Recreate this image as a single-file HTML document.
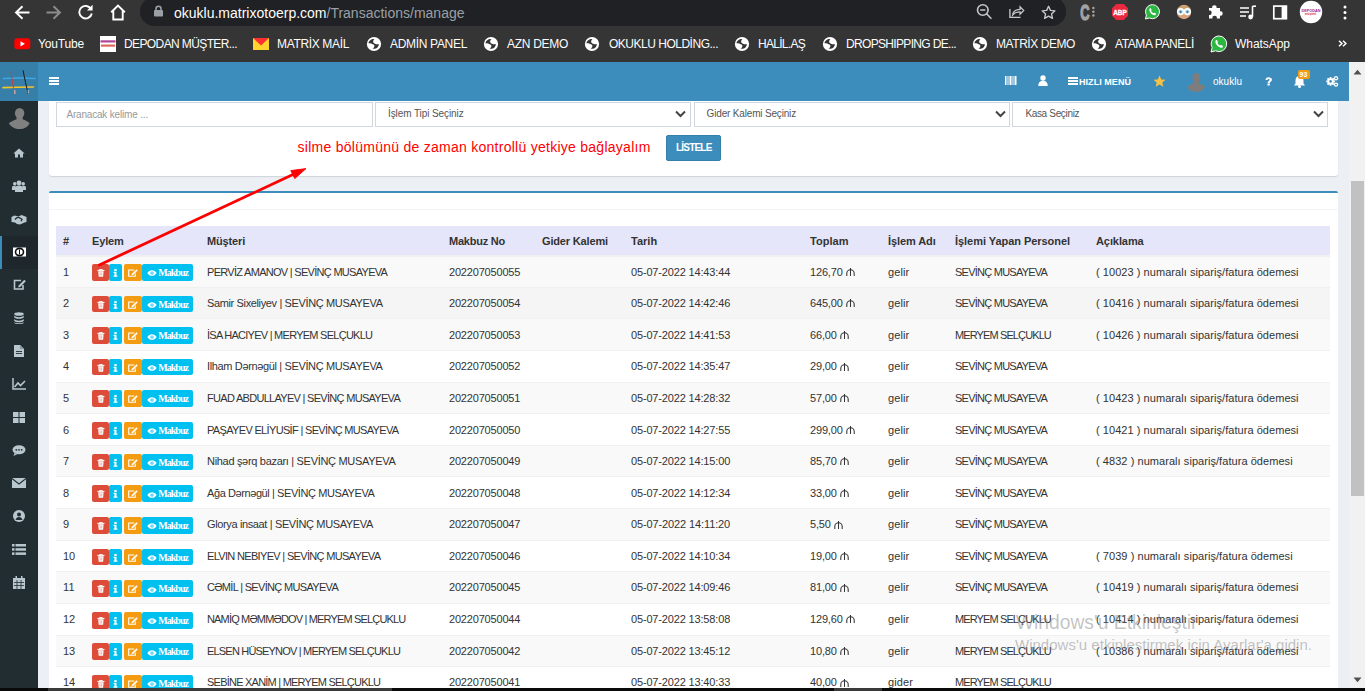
<!DOCTYPE html>
<html><head><meta charset="utf-8"><title>Transactions</title>
<style>
html,body{margin:0;padding:0;}
body{width:1365px;height:691px;overflow:hidden;position:relative;background:#ecf0f5;font-family:"Liberation Sans",sans-serif;}
.r{position:absolute;display:block;}
.t{position:absolute;white-space:pre;}
</style></head><body>
<div class="r" style="left:0px;top:0px;width:1365px;height:62px;background:#353535;"></div>
<div class="r" style="left:140px;top:-3px;width:926px;height:28.6px;background:#202124;border-radius:14.3px;"></div>
<svg class="r" style="left:13px;top:3.5px" width="18" height="17" viewBox="0 0 18 17"><path d="M16.5 8.5H3.5M9.5 2.2L3 8.5l6.5 6.3" fill="none" stroke="#fff" stroke-width="1.9"/></svg>
<svg class="r" style="left:45px;top:3.5px" width="18" height="17" viewBox="0 0 18 17"><path d="M1.5 8.5h13M8.5 2.2L15 8.5l-6.5 6.3" fill="none" stroke="#8c8c8c" stroke-width="1.9"/></svg>
<svg class="r" style="left:77px;top:3px" width="18" height="17" viewBox="0 0 18 17"><path d="M14.2 6.2A6.3 6.3 0 1 0 14.8 10.5" fill="none" stroke="#fff" stroke-width="1.9"/><path d="M15.6 1.8v5.6h-5.6z" fill="#fff"/></svg>
<svg class="r" style="left:109px;top:2.5px" width="18" height="18" viewBox="0 0 18 18"><path d="M2.2 9.2L9 2.5l6.8 6.7M4.3 7.5v9h9.4v-9" fill="none" stroke="#fff" stroke-width="1.9"/></svg>
<svg class="r" style="left:153px;top:5px" width="11" height="12" viewBox="0 0 11 12"><rect x="1" y="5" width="9" height="6.5" rx="1" fill="#9aa0a6"/><path d="M3 5.5V3.8a2.5 2.5 0 0 1 5 0v1.7" fill="none" stroke="#9aa0a6" stroke-width="1.6"/></svg>
<div class="t" style="left:174.00px;top:5.75px;font-size:14px;line-height:14px;color:#fdfdfd;font-weight:400;font-family:'Liberation Sans',sans-serif;letter-spacing:0.000px;">okuklu.matrixotoerp.com</div>
<div class="t" style="left:326.51px;top:5.75px;font-size:14px;line-height:14px;color:#9aa0a6;font-weight:400;font-family:'Liberation Sans',sans-serif;letter-spacing:0.000px;">/Transactions/manage</div>
<svg class="r" style="left:976px;top:3.3px" width="17" height="18" viewBox="0 0 17 18"><circle cx="6.8" cy="7" r="5.3" fill="none" stroke="#c8c8c8" stroke-width="1.6"/><path d="M4.2 7h5.2M10.6 10.8l4.8 5" stroke="#c8c8c8" stroke-width="1.6"/></svg>
<svg class="r" style="left:1008px;top:4.2px" width="18" height="16" viewBox="0 0 18 16"><g transform="translate(.6 .2) scale(.88)"><path d="M1.5 5.5v9.5h12" fill="none" stroke="#c8c8c8" stroke-width="1.5"/><path d="M4.5 12.5c0.5-4.5 3.5-6.5 8.5-6.5V3l4.2 4.2-4.2 4.2V8.6c-3.5 0-6.3 1.2-8.5 3.9z" fill="none" stroke="#c8c8c8" stroke-width="1.4"/></g></svg>
<svg class="r" style="left:1040px;top:3.6px" width="17" height="17" viewBox="0 0 17 17"><g transform="translate(.9 .9) scale(.9)"><path d="M8.5 1.5l2.1 4.6 5 .5-3.8 3.4 1.1 5-4.4-2.6-4.4 2.6 1.1-5L1.4 6.6l5-.5z" fill="none" stroke="#c8c8c8" stroke-width="1.5" stroke-linejoin="round"/></g></svg>
<svg class="r" style="left:1080px;top:0px" width="17" height="24" viewBox="0 0 17 24"><text x="0.3" y="19.6" font-size="21.5" font-weight="700" fill="#a3a3a3" font-family="Liberation Sans" stroke="#a3a3a3" stroke-width="1.3" transform="scale(.6 1)">C</text><circle cx="13.4" cy="8" r="1.25" fill="#a3a3a3"/><circle cx="13.4" cy="11.7" r="1.25" fill="#a3a3a3"/><circle cx="13.4" cy="15.4" r="1.25" fill="#a3a3a3"/></svg>
<svg class="r" style="left:1111px;top:3px" width="18" height="18" viewBox="0 0 18 18"><path d="M5.3 1h7.4L17 5.3v7.4L12.7 17H5.3L1 12.7V5.3z" fill="#e8293f"/><text x="9" y="11.8" font-size="6.5" font-weight="700" text-anchor="middle" fill="#fff" stroke="#fff" stroke-width=".3" font-family="Liberation Sans">ABP</text></svg>
<svg class="r" style="left:1143px;top:3px" width="19" height="19" viewBox="0 0 19 19"><g transform="translate(1 .3) scale(.9)"><path d="M9.5 1.5a7.8 7.8 0 0 0-6.8 11.6L1.6 17.4l4.4-1.1A7.8 7.8 0 1 0 9.5 1.5z" fill="#2cb742" stroke="#fff" stroke-width="1.1"/><path d="M6.6 5.6c.4-.3.9-.2 1.1.3l.7 1.5c.1.4-.3.8-.5 1.1.6 1.2 1.4 2 2.6 2.6.3-.3.6-.7 1.1-.5l1.5.7c.4.2.5.7.2 1.1-.6.9-1.6 1.1-2.6.7-2.1-.8-3.8-2.5-4.6-4.6-.4-1 0-2.2.5-2.9z" fill="#fff"/></g></svg>
<svg class="r" style="left:1175px;top:2px" width="18" height="18" viewBox="0 0 18 18"><circle cx="9" cy="10" r="7.2" fill="#d9a37e"/><path d="M2.5 7.5c1-5 12-5 13 0" fill="#c9a36a"/><circle cx="5.6" cy="9.6" r="3" fill="#bfe3ef" stroke="#fff" stroke-width="1.3"/><circle cx="12.4" cy="9.6" r="3" fill="#bfe3ef" stroke="#fff" stroke-width="1.3"/><circle cx="5.6" cy="9.8" r="1.1" fill="#3a6f84"/><circle cx="12.4" cy="9.8" r="1.1" fill="#3a6f84"/></svg>
<svg class="r" style="left:1207px;top:2px" width="17" height="17" viewBox="0 0 17 17"><path d="M2 6h3.2a2.2 2.2 0 1 1 4.3 0H13v3.3a2.2 2.2 0 1 1 0 4.3V16.5H9.8a2.2 2.2 0 1 0-4.3 0H2v-3.6a2.2 2.2 0 1 0 0-4.3z" fill="#fff"/></svg>
<svg class="r" style="left:1239px;top:4px" width="18" height="17" viewBox="0 0 18 17"><path d="M1 4h9M1 8h9M1 12h6" stroke="#fff" stroke-width="1.6"/><path d="M13.5 2.2v10.5" stroke="#fff" stroke-width="1.6"/><path d="M13.5 2.2h3.5" stroke="#fff" stroke-width="1.6"/><circle cx="11.6" cy="13" r="2.4" fill="#fff"/></svg>
<svg class="r" style="left:1272px;top:4px" width="16" height="17" viewBox="0 0 16 17"><rect x="1.8" y="2.1" width="12.6" height="12.6" fill="none" stroke="#fff" stroke-width="1.7"/><rect x="9.6" y="2.1" width="4.8" height="12.6" fill="#fff"/></svg>
<svg class="r" style="left:1299px;top:0px" width="24" height="24" viewBox="0 0 24 24"><circle cx="12" cy="12" r="11.2" fill="#fff"/><text x="12" y="11.5" font-size="3.8" font-weight="700" text-anchor="middle" fill="#a3238e" font-family="Liberation Sans">DEPODAN</text><text x="11.5" y="15" font-size="3.2" font-weight="700" text-anchor="middle" fill="#d62d4a" font-family="Liberation Sans">müşteri</text></svg>
<svg class="r" style="left:1342px;top:4px" width="6" height="17" viewBox="0 0 6 17"><circle cx="3" cy="3" r="1.5" fill="#fff"/><circle cx="3" cy="8.5" r="1.5" fill="#fff"/><circle cx="3" cy="14" r="1.5" fill="#fff"/></svg>
<svg class="r" style="left:13.5px;top:38px" width="17" height="12" viewBox="0 0 17 12"><rect x="0.3" y="0.3" width="16" height="11" rx="2.8" fill="#f00"/><path d="M6.5 3.2v5.2l4.4-2.6z" fill="#fff"/></svg>
<div class="t" style="left:38.00px;top:38.04px;font-size:12px;line-height:12px;color:#fdfdfd;font-weight:400;font-family:'Liberation Sans',sans-serif;letter-spacing:-0.165px;">YouTube</div>
<svg class="r" style="left:100px;top:36px" width="16" height="16" viewBox="0 0 16 16"><rect x="0" y="0" width="16" height="16" fill="#fff"/><rect x="0.5" y="4.3" width="15" height="2.2" fill="#b0459a"/><rect x="1" y="8.5" width="14" height="2.2" fill="#e0695f"/></svg>
<div class="t" style="left:124.00px;top:38.04px;font-size:12px;line-height:12px;color:#fdfdfd;font-weight:400;font-family:'Liberation Sans',sans-serif;letter-spacing:-0.609px;">DEPODAN MÜŞTER...</div>
<svg class="r" style="left:252px;top:37px" width="18" height="14" viewBox="0 0 18 14"><rect x="1" y="1" width="16" height="12" fill="#ffd42e"/><path d="M1 1l8 7.6L17 1z" fill="#ff3030"/></svg>
<div class="t" style="left:277.00px;top:38.04px;font-size:12px;line-height:12px;color:#fdfdfd;font-weight:400;font-family:'Liberation Sans',sans-serif;letter-spacing:-0.344px;">MATRİX MAİL</div>
<svg class="r" style="left:366px;top:36px" width="16" height="16" viewBox="0 0 16 16"><circle cx="8" cy="8" r="7.1" fill="#fff"/><path d="M2.4 7.2C2.9 5 4.6 3.5 6.8 3.1L8.5 3.3C7.3 4.1 6.9 5.2 7.3 6.3 7.7 7.3 8.6 7.7 9.6 8L8.3 9C6.9 8.6 5.4 7.6 4.2 7.3 3.5 7.1 2.9 7.1 2.4 7.2zM8.3 9L9.6 8C10.8 8.5 12 8.3 12.9 7.9 12.8 10.4 11.2 12.3 8.9 12.8L6.5 12.7C7.6 12.1 8.4 11.3 8.3 10.3z" fill="#353535"/></svg>
<div class="t" style="left:390.00px;top:38.04px;font-size:12px;line-height:12px;color:#fdfdfd;font-weight:400;font-family:'Liberation Sans',sans-serif;letter-spacing:-0.315px;">ADMİN PANEL</div>
<svg class="r" style="left:483px;top:36px" width="16" height="16" viewBox="0 0 16 16"><circle cx="8" cy="8" r="7.1" fill="#fff"/><path d="M2.4 7.2C2.9 5 4.6 3.5 6.8 3.1L8.5 3.3C7.3 4.1 6.9 5.2 7.3 6.3 7.7 7.3 8.6 7.7 9.6 8L8.3 9C6.9 8.6 5.4 7.6 4.2 7.3 3.5 7.1 2.9 7.1 2.4 7.2zM8.3 9L9.6 8C10.8 8.5 12 8.3 12.9 7.9 12.8 10.4 11.2 12.3 8.9 12.8L6.5 12.7C7.6 12.1 8.4 11.3 8.3 10.3z" fill="#353535"/></svg>
<div class="t" style="left:507.00px;top:38.04px;font-size:12px;line-height:12px;color:#fdfdfd;font-weight:400;font-family:'Liberation Sans',sans-serif;letter-spacing:-0.292px;">AZN DEMO</div>
<svg class="r" style="left:584px;top:36px" width="16" height="16" viewBox="0 0 16 16"><circle cx="8" cy="8" r="7.1" fill="#fff"/><path d="M2.4 7.2C2.9 5 4.6 3.5 6.8 3.1L8.5 3.3C7.3 4.1 6.9 5.2 7.3 6.3 7.7 7.3 8.6 7.7 9.6 8L8.3 9C6.9 8.6 5.4 7.6 4.2 7.3 3.5 7.1 2.9 7.1 2.4 7.2zM8.3 9L9.6 8C10.8 8.5 12 8.3 12.9 7.9 12.8 10.4 11.2 12.3 8.9 12.8L6.5 12.7C7.6 12.1 8.4 11.3 8.3 10.3z" fill="#353535"/></svg>
<div class="t" style="left:609.00px;top:38.04px;font-size:12px;line-height:12px;color:#fdfdfd;font-weight:400;font-family:'Liberation Sans',sans-serif;letter-spacing:-0.492px;">OKUKLU HOLDİNG...</div>
<svg class="r" style="left:734px;top:36px" width="16" height="16" viewBox="0 0 16 16"><circle cx="8" cy="8" r="7.1" fill="#fff"/><path d="M2.4 7.2C2.9 5 4.6 3.5 6.8 3.1L8.5 3.3C7.3 4.1 6.9 5.2 7.3 6.3 7.7 7.3 8.6 7.7 9.6 8L8.3 9C6.9 8.6 5.4 7.6 4.2 7.3 3.5 7.1 2.9 7.1 2.4 7.2zM8.3 9L9.6 8C10.8 8.5 12 8.3 12.9 7.9 12.8 10.4 11.2 12.3 8.9 12.8L6.5 12.7C7.6 12.1 8.4 11.3 8.3 10.3z" fill="#353535"/></svg>
<div class="t" style="left:758.00px;top:38.04px;font-size:12px;line-height:12px;color:#fdfdfd;font-weight:400;font-family:'Liberation Sans',sans-serif;letter-spacing:-0.712px;">HALİL.AŞ</div>
<svg class="r" style="left:822px;top:36px" width="16" height="16" viewBox="0 0 16 16"><circle cx="8" cy="8" r="7.1" fill="#fff"/><path d="M2.4 7.2C2.9 5 4.6 3.5 6.8 3.1L8.5 3.3C7.3 4.1 6.9 5.2 7.3 6.3 7.7 7.3 8.6 7.7 9.6 8L8.3 9C6.9 8.6 5.4 7.6 4.2 7.3 3.5 7.1 2.9 7.1 2.4 7.2zM8.3 9L9.6 8C10.8 8.5 12 8.3 12.9 7.9 12.8 10.4 11.2 12.3 8.9 12.8L6.5 12.7C7.6 12.1 8.4 11.3 8.3 10.3z" fill="#353535"/></svg>
<div class="t" style="left:846.00px;top:38.04px;font-size:12px;line-height:12px;color:#fdfdfd;font-weight:400;font-family:'Liberation Sans',sans-serif;letter-spacing:-0.668px;">DROPSHIPPING DE...</div>
<svg class="r" style="left:972px;top:36px" width="16" height="16" viewBox="0 0 16 16"><circle cx="8" cy="8" r="7.1" fill="#fff"/><path d="M2.4 7.2C2.9 5 4.6 3.5 6.8 3.1L8.5 3.3C7.3 4.1 6.9 5.2 7.3 6.3 7.7 7.3 8.6 7.7 9.6 8L8.3 9C6.9 8.6 5.4 7.6 4.2 7.3 3.5 7.1 2.9 7.1 2.4 7.2zM8.3 9L9.6 8C10.8 8.5 12 8.3 12.9 7.9 12.8 10.4 11.2 12.3 8.9 12.8L6.5 12.7C7.6 12.1 8.4 11.3 8.3 10.3z" fill="#353535"/></svg>
<div class="t" style="left:996.00px;top:38.04px;font-size:12px;line-height:12px;color:#fdfdfd;font-weight:400;font-family:'Liberation Sans',sans-serif;letter-spacing:-0.435px;">MATRİX DEMO</div>
<svg class="r" style="left:1091px;top:36px" width="16" height="16" viewBox="0 0 16 16"><circle cx="8" cy="8" r="7.1" fill="#fff"/><path d="M2.4 7.2C2.9 5 4.6 3.5 6.8 3.1L8.5 3.3C7.3 4.1 6.9 5.2 7.3 6.3 7.7 7.3 8.6 7.7 9.6 8L8.3 9C6.9 8.6 5.4 7.6 4.2 7.3 3.5 7.1 2.9 7.1 2.4 7.2zM8.3 9L9.6 8C10.8 8.5 12 8.3 12.9 7.9 12.8 10.4 11.2 12.3 8.9 12.8L6.5 12.7C7.6 12.1 8.4 11.3 8.3 10.3z" fill="#353535"/></svg>
<div class="t" style="left:1115.00px;top:38.04px;font-size:12px;line-height:12px;color:#fdfdfd;font-weight:400;font-family:'Liberation Sans',sans-serif;letter-spacing:-0.419px;">ATAMA PANELİ</div>
<svg class="r" style="left:1210px;top:35px" width="18" height="18" viewBox="0 0 18 18"><path d="M9 1a7.8 7.8 0 0 0-6.8 11.6L1 17l4.5-1.2A7.8 7.8 0 1 0 9 1z" fill="#2cb742" stroke="#fff" stroke-width="1"/><path d="M6.1 5.1c.4-.3.9-.2 1.1.3l.7 1.5c.1.4-.3.8-.5 1.1.6 1.2 1.4 2 2.6 2.6.3-.3.6-.7 1.1-.5l1.5.7c.4.2.5.7.2 1.1-.6.9-1.6 1.1-2.6.7-2.1-.8-3.8-2.5-4.6-4.6-.4-1 0-2.2.5-2.9z" fill="#fff"/></svg>
<div class="t" style="left:1235.00px;top:38.04px;font-size:12px;line-height:12px;color:#fdfdfd;font-weight:400;font-family:'Liberation Sans',sans-serif;letter-spacing:-0.045px;">WhatsApp</div>
<svg class="r" style="left:1338.3px;top:40.3px" width="10" height="7" viewBox="0 0 10 7"><path d="M1 .8l2.9 2.7L1 6.2M5 .8l2.9 2.7L5 6.2" fill="none" stroke="#fff" stroke-width="1.5"/></svg>
<div class="r" style="left:0px;top:62px;width:1365px;height:629px;background:#ecf0f5;"></div>
<div class="r" style="left:0px;top:62px;width:1349px;height:39px;background:#3c8dbc;"></div>
<div class="r" style="left:0px;top:62px;width:38px;height:39px;background:#367fa9;"></div>
<svg class="r" style="left:2px;top:70px" width="34" height="26" viewBox="0 0 34 26"><path d="M1.5 8.6C12 7.8 22 7.8 33 8.6" stroke="#3aa8e8" stroke-width="1.5" fill="none" stroke-linecap="round"/><path d="M1 17.6c10-.4 20-.6 30.5-.6" stroke="#f5c52a" stroke-width="1.6" fill="none" stroke-linecap="round"/><path d="M9 1.4c1 7 2 15 3.5 22.6" stroke="#d83a3a" stroke-width="1" fill="none"/><path d="M21.1 .3c1.5 8 3 16 5.3 23.7" stroke="#1a1a1a" stroke-width="1" fill="none"/><path d="M12.7 20l.2 4M26 20l.5 3.5" stroke="#e8e8e8" stroke-width=".8"/></svg>
<div class="r" style="left:49px;top:77px;width:10px;height:2px;background:#fff;"></div>
<div class="r" style="left:49px;top:80px;width:10px;height:2px;background:#fff;"></div>
<div class="r" style="left:49px;top:83px;width:10px;height:2px;background:#fff;"></div>
<svg class="r" style="left:1005px;top:76px" width="12" height="9" viewBox="0 0 12 9"><rect x="0" y="0" width="1.5" height="9" fill="#fff"/><rect x="2.5" y="0" width="1" height="9" fill="#fff"/><rect x="4.5" y="0" width="2" height="9" fill="#fff"/><rect x="7.5" y="0" width="1" height="9" fill="#fff"/><rect x="9.5" y="0" width="2" height="9" fill="#fff"/></svg>
<svg class="r" style="left:1038px;top:75px" width="10" height="11" viewBox="0 0 10 11"><circle cx="5" cy="3" r="2.7" fill="#fff"/><path d="M0.3 11c0-3.6 2-5.2 4.7-5.2s4.7 1.6 4.7 5.2z" fill="#fff"/></svg>
<div class="r" style="left:1068px;top:77px;width:10px;height:2px;background:#fff;"></div>
<div class="r" style="left:1068px;top:80px;width:10px;height:2px;background:#fff;"></div>
<div class="r" style="left:1068px;top:83px;width:10px;height:2px;background:#fff;"></div>
<div class="t" style="left:1079.00px;top:77.98px;font-size:9px;line-height:9px;color:#fff;font-weight:700;font-family:'Liberation Sans',sans-serif;letter-spacing:0.050px;">HIZLI MENÜ</div>
<svg class="r" style="left:1153px;top:75px" width="13" height="12" viewBox="0 0 13 12"><path d="M6.5 0.5l1.8 3.9 4.2.4-3.2 2.8 1 4.1-3.8-2.2-3.8 2.2 1-4.1L0.5 4.8l4.2-.4z" fill="#f5c244"/></svg>
<svg class="r" style="left:1186px;top:72px" width="20" height="21" viewBox="0 0 20 21"><ellipse cx="10.3" cy="5.8" rx="4" ry="4.8" fill="#7d7d7d"/><path d="M7.8 8.5h5v3.5h-5z" fill="#7d7d7d"/><path d="M1 14.8C3 13 5.5 12 7.8 11.2h5c2.3.8 4.8 1.8 6.5 3.6C17.8 18 14.5 20 10.2 20S2.8 18 1 14.8z" fill="#7d7d7d"/></svg>
<div class="t" style="left:1213.00px;top:76.94px;font-size:10px;line-height:10px;color:#fff;font-weight:400;font-family:'Liberation Sans',sans-serif;letter-spacing:0.015px;">okuklu</div>
<svg class="r" style="left:1265px;top:76.8px" width="8" height="9" viewBox="0 0 8 9"><path d="M.5 2.9C.7 1 2 .3 3.6.3c1.9 0 3.3 1 3.3 2.5 0 2-2.2 2-2.2 3.4H2.6c-.2-2.2 2-2.4 2-3.3 0-.5-.4-.9-1-.9s-1.1.4-1.2 1z" fill="#fff"/><rect x="2.5" y="6.6" width="2.3" height="1.9" fill="#fff"/></svg>
<svg class="r" style="left:1293px;top:75px" width="13" height="13" viewBox="0 0 13 13"><path d="M6.5 1c2.5 0 4 1.8 4 4.5v3l1.5 2H1l1.5-2v-3C2.5 2.8 4 1 6.5 1z" fill="#fff"/><circle cx="6.5" cy="11.5" r="1.5" fill="#fff"/></svg>
<div class="r" style="left:1298px;top:70px;width:12px;height:9px;background:#f39c12;border-radius:2px;"></div>
<div class="t" style="left:1299.50px;top:71.37px;font-size:7px;line-height:7px;color:#fff;font-weight:700;font-family:'Liberation Sans',sans-serif;letter-spacing:0.000px;">93</div>
<svg class="r" style="left:1325px;top:74.5px" width="14" height="13" viewBox="0 0 14 13"><g fill="#fff"><circle cx="5.6" cy="6.4" r="3.2"/><g stroke="#fff" stroke-width="1.8"><path d="M5.6 2v8.8M1.2 6.4H10M2.5 3.3l6.2 6.2M8.7 3.3l-6.2 6.2"/></g><circle cx="11" cy="3.2" r="2.2"/><circle cx="11" cy="9.6" r="2.2"/></g><circle cx="5.6" cy="6.4" r="1.3" fill="#3c8dbc"/><circle cx="11" cy="3.2" r=".9" fill="#3c8dbc"/><circle cx="11" cy="9.6" r=".9" fill="#3c8dbc"/></svg>
<div class="r" style="left:1349px;top:62px;width:16px;height:626px;background:#f1f1f1;"></div>
<svg class="r" style="left:1353px;top:68.5px" width="9" height="6" viewBox="0 0 9 6"><path d="M0.5 5.5L4.5 0.8 8.5 5.5z" fill="#505050"/></svg>
<svg class="r" style="left:1353px;top:677px" width="9" height="6" viewBox="0 0 9 6"><path d="M0.5 0.5L4.5 5.2 8.5 0.5z" fill="#505050"/></svg>
<div class="r" style="left:1351px;top:181px;width:13px;height:315px;background:#c1c1c1;"></div>
<div class="r" style="left:0px;top:101px;width:38px;height:590px;background:#222d32;"></div>
<svg class="r" style="left:8px;top:107px" width="22" height="23" viewBox="0 0 22 23"><ellipse cx="11.6" cy="6.3" rx="4.7" ry="5.4" fill="#808080"/><path d="M8.6 9h6v4h-6z" fill="#808080"/><path d="M0.8 16.2C3.2 14.2 6 13.2 8.6 12.2h6c2.6 1 5.4 2 7 4C20 19.8 16 22 11.5 22S3 19.8.8 16.2z" fill="#808080"/></svg>
<div class="r" style="left:0px;top:236px;width:38px;height:33px;background:#1e282c;"></div>
<div class="r" style="left:0px;top:236px;width:2px;height:33px;background:#3c8dbc;"></div>
<svg class="r" style="left:13px;top:148px" width="12" height="10" viewBox="0 0 12 10"><path d="M6 .5L.3 5.5h1.7v4h3v-3h2v3h3v-4h1.7z" fill="#b8c7ce"/></svg>
<svg class="r" style="left:12px;top:180px" width="14" height="12" viewBox="0 0 14 12"><circle cx="7" cy="3" r="2.4" fill="#b8c7ce"/><circle cx="2.8" cy="3.8" r="1.8" fill="#b8c7ce"/><circle cx="11.2" cy="3.8" r="1.8" fill="#b8c7ce"/><path d="M3 12V8c0-1.6 1.6-2.6 4-2.6s4 1 4 2.6v4z" fill="#b8c7ce"/><path d="M0 10V7.5c0-1 .8-1.8 2.2-1.8h1.5V10zM14 10V7.5c0-1-.8-1.8-2.2-1.8h-1.5V10z" fill="#b8c7ce"/></svg>
<svg class="r" style="left:11px;top:214px" width="16" height="11" viewBox="0 0 16 11"><path d="M0.5 3l3-1.5 4 1 3-1.5 2 .7 3 1.3v5l-2 .5-4.5 2-3-.5-2-1.5-3.5-.5z" fill="#b8c7ce"/><path d="M4 5.5c1.5-2 3.5-2.5 5-1.5l2 1.5-1 1.8" fill="none" stroke="#222d32" stroke-width="1.3"/></svg>
<svg class="r" style="left:13px;top:247px" width="13" height="10" viewBox="0 0 13 10"><rect x="0" y="0.5" width="13" height="9" fill="#fff"/><ellipse cx="6.5" cy="5" rx="4" ry="3.6" fill="none" stroke="#111" stroke-width="1.6"/><path d="M6.5 2.5v5" stroke="#111" stroke-width="1"/></svg>
<svg class="r" style="left:13px;top:279px" width="13" height="11" viewBox="0 0 13 11"><path d="M8 1.5H1.5v8.5H10V6" fill="none" stroke="#b8c7ce" stroke-width="1.6"/><path d="M11.3 0.8l1.5 1.5-5.6 5.6-2 .5.5-2z" fill="#b8c7ce"/></svg>
<svg class="r" style="left:14px;top:312px" width="10" height="12" viewBox="0 0 10 12"><ellipse cx="5" cy="2" rx="4.8" ry="1.8" fill="#b8c7ce"/><path d="M.2 3.5v1.5C.2 6 2.4 6.8 5 6.8S9.8 6 9.8 5V3.5C9 4.6 7 5.2 5 5.2S1 4.6.2 3.5zM.2 7v1.5c0 1 2.2 1.8 4.8 1.8s4.8-.8 4.8-1.8V7C9 8.1 7 8.7 5 8.7S1 8.1.2 7zM.2 10.2v.3c0 1 2.2 1.5 4.8 1.5s4.8-.5 4.8-1.5v-.3C9 11 7 11.3 5 11.3S1 11 .2 10.2z" fill="#b8c7ce"/></svg>
<svg class="r" style="left:14px;top:345px" width="10" height="12" viewBox="0 0 10 12"><path d="M0 0h6l4 4v8H0z" fill="#b8c7ce"/><path d="M6 0v4h4" fill="#8a9ba3"/><path d="M2 6.5h6M2 8.5h6" stroke="#222d32" stroke-width="0.9"/></svg>
<svg class="r" style="left:12px;top:378px" width="14" height="12" viewBox="0 0 14 12"><path d="M1 0v11h13" fill="none" stroke="#b8c7ce" stroke-width="1.5"/><path d="M2.5 9L6 5l2.5 2.5L13 3" fill="none" stroke="#b8c7ce" stroke-width="1.6"/></svg>
<svg class="r" style="left:13px;top:412px" width="12" height="11" viewBox="0 0 12 11"><rect x="0" y="0" width="5.5" height="5" fill="#b8c7ce"/><rect x="6.5" y="0" width="5.5" height="5" fill="#b8c7ce"/><rect x="0" y="6" width="5.5" height="5" fill="#b8c7ce"/><rect x="6.5" y="6" width="5.5" height="5" fill="#b8c7ce"/></svg>
<svg class="r" style="left:12px;top:445px" width="14" height="11" viewBox="0 0 14 11"><ellipse cx="7" cy="4.8" rx="6.5" ry="4.5" fill="#b8c7ce"/><path d="M2.5 8l-1 3 4-2z" fill="#b8c7ce"/><circle cx="4.3" cy="4.8" r=".9" fill="#222d32"/><circle cx="7" cy="4.8" r=".9" fill="#222d32"/><circle cx="9.7" cy="4.8" r=".9" fill="#222d32"/></svg>
<svg class="r" style="left:12px;top:478px" width="14" height="10" viewBox="0 0 14 10"><rect x="0" y="0" width="14" height="10" fill="#b8c7ce"/><path d="M0 .5L7 6 14 .5" fill="none" stroke="#222d32" stroke-width="1.1"/></svg>
<svg class="r" style="left:13px;top:510px" width="12" height="12" viewBox="0 0 12 12"><circle cx="6" cy="6" r="6" fill="#b8c7ce"/><circle cx="6" cy="4.5" r="2" fill="#222d32"/><path d="M2.5 10c.5-2 1.8-3 3.5-3s3 1 3.5 3" fill="#222d32"/><circle cx="6" cy="6" r="4.7" fill="none" stroke="#b8c7ce" stroke-width="0.1"/></svg>
<svg class="r" style="left:12px;top:544px" width="14" height="11" viewBox="0 0 14 11"><rect x="0" y="0" width="2.5" height="2.5" fill="#b8c7ce"/><rect x="3.5" y="0" width="10.5" height="2.5" fill="#b8c7ce"/><rect x="0" y="4.2" width="2.5" height="2.5" fill="#b8c7ce"/><rect x="3.5" y="4.2" width="10.5" height="2.5" fill="#b8c7ce"/><rect x="0" y="8.4" width="2.5" height="2.5" fill="#b8c7ce"/><rect x="3.5" y="8.4" width="10.5" height="2.5" fill="#b8c7ce"/></svg>
<svg class="r" style="left:13px;top:576px" width="12" height="13" viewBox="0 0 12 13"><rect x="0" y="2" width="12" height="11" fill="#b8c7ce"/><rect x="2.5" y="0" width="1.5" height="3" fill="#b8c7ce"/><rect x="8" y="0" width="1.5" height="3" fill="#b8c7ce"/><path d="M1 6.5h10M1 9.5h10M4 4v9M8 4v9" stroke="#222d32" stroke-width=".8"/></svg>
<div class="r" style="left:49px;top:101px;width:1289px;height:75px;background:#fff;border-radius:0 0 3px 3px;box-shadow:0 1px 1px rgba(0,0,0,0.12);"></div>
<div class="r" style="left:56px;top:102px;width:316.5px;height:24.5px;background:#fff;box-sizing:border-box;border:1px solid #d2d6de;"></div>
<div class="t" style="left:66.40px;top:109.83px;font-size:10px;line-height:10px;color:#999;font-weight:400;font-family:'Liberation Sans',sans-serif;letter-spacing:-0.181px;">Aranacak kelime ...</div>
<div class="r" style="left:375px;top:102px;width:315.5px;height:24.5px;background:#fff;box-sizing:border-box;border:1px solid #d2d6de;"></div>
<div class="t" style="left:388.00px;top:109.13px;font-size:10px;line-height:10px;color:#555;font-weight:400;font-family:'Liberation Sans',sans-serif;letter-spacing:-0.092px;">İşlem Tipi Seçiniz</div>
<svg class="r" style="left:675.0px;top:110px" width="11" height="8" viewBox="0 0 11 8"><path d="M1 1.5l4.5 4.5L10 1.5" fill="none" stroke="#444" stroke-width="2"/></svg>
<div class="r" style="left:693.5px;top:102px;width:316.5px;height:24.5px;background:#fff;box-sizing:border-box;border:1px solid #d2d6de;"></div>
<div class="t" style="left:706.60px;top:109.13px;font-size:10px;line-height:10px;color:#555;font-weight:400;font-family:'Liberation Sans',sans-serif;letter-spacing:-0.171px;">Gider Kalemi Seçiniz</div>
<svg class="r" style="left:994.5px;top:110px" width="11" height="8" viewBox="0 0 11 8"><path d="M1 1.5l4.5 4.5L10 1.5" fill="none" stroke="#444" stroke-width="2"/></svg>
<div class="r" style="left:1012px;top:102px;width:316px;height:24.5px;background:#fff;box-sizing:border-box;border:1px solid #d2d6de;"></div>
<div class="t" style="left:1025.40px;top:109.13px;font-size:10px;line-height:10px;color:#555;font-weight:400;font-family:'Liberation Sans',sans-serif;letter-spacing:-0.334px;">Kasa Seçiniz</div>
<svg class="r" style="left:1312.5px;top:110px" width="11" height="8" viewBox="0 0 11 8"><path d="M1 1.5l4.5 4.5L10 1.5" fill="none" stroke="#444" stroke-width="2"/></svg>
<div class="t" style="left:297.60px;top:140.35px;font-size:14px;line-height:14px;color:#ff0000;font-weight:400;font-family:'Liberation Sans',sans-serif;letter-spacing:0.264px;">silme bölümünü de zaman kontrollü yetkiye bağlayalım</div>
<div class="r" style="left:666px;top:135px;width:55px;height:26px;background:#3c8dbc;border-radius:2px;box-sizing:border-box;border:1px solid #367fa9;"></div>
<div class="t" style="left:676.00px;top:142.84px;font-size:10px;line-height:10px;color:#fff;font-weight:700;font-family:'Liberation Sans',sans-serif;letter-spacing:-0.802px;">LİSTELE</div>
<div class="r" style="left:49px;top:191px;width:1289px;height:500px;background:#fff;border-radius:3px 3px 0 0;"></div>
<div class="r" style="left:49px;top:191px;width:1289px;height:2.4px;background:#3c8dbc;border-radius:3px 3px 0 0;"></div>
<div class="r" style="left:49px;top:209px;width:1289px;height:1px;background:#f4f4f4;"></div>
<div class="r" style="left:56px;top:226px;width:1274px;height:29px;background:#e6e6fa;"></div>
<div class="t" style="left:63.00px;top:235.59px;font-size:11px;line-height:11px;color:#333;font-weight:700;font-family:'Liberation Sans',sans-serif;letter-spacing:-0.273px;">#</div>
<div class="t" style="left:92.00px;top:235.59px;font-size:11px;line-height:11px;color:#333;font-weight:700;font-family:'Liberation Sans',sans-serif;letter-spacing:-0.151px;">Eylem</div>
<div class="t" style="left:207.00px;top:235.59px;font-size:11px;line-height:11px;color:#333;font-weight:700;font-family:'Liberation Sans',sans-serif;letter-spacing:-0.137px;">Müşteri</div>
<div class="t" style="left:449.00px;top:235.59px;font-size:11px;line-height:11px;color:#333;font-weight:700;font-family:'Liberation Sans',sans-serif;letter-spacing:-0.235px;">Makbuz No</div>
<div class="t" style="left:542.00px;top:235.59px;font-size:11px;line-height:11px;color:#333;font-weight:700;font-family:'Liberation Sans',sans-serif;letter-spacing:-0.160px;">Gider Kalemi</div>
<div class="t" style="left:631.00px;top:235.59px;font-size:11px;line-height:11px;color:#333;font-weight:700;font-family:'Liberation Sans',sans-serif;letter-spacing:0.019px;">Tarih</div>
<div class="t" style="left:810.00px;top:235.59px;font-size:11px;line-height:11px;color:#333;font-weight:700;font-family:'Liberation Sans',sans-serif;letter-spacing:0.038px;">Toplam</div>
<div class="t" style="left:888.00px;top:235.59px;font-size:11px;line-height:11px;color:#333;font-weight:700;font-family:'Liberation Sans',sans-serif;letter-spacing:-0.099px;">İşlem Adı</div>
<div class="t" style="left:955.00px;top:235.59px;font-size:11px;line-height:11px;color:#333;font-weight:700;font-family:'Liberation Sans',sans-serif;letter-spacing:-0.045px;">İşlemi Yapan Personel</div>
<div class="t" style="left:1096.00px;top:235.59px;font-size:11px;line-height:11px;color:#333;font-weight:700;font-family:'Liberation Sans',sans-serif;letter-spacing:-0.085px;">Açıklama</div>
<div class="r" style="left:56px;top:255.0px;width:1274px;height:31.63px;background:#f9f9f9;"></div>
<div class="r" style="left:56px;top:255.0px;width:1274px;height:2px;background:#f0f0f0;"></div>
<div class="t" style="left:63.00px;top:266.59px;font-size:11px;line-height:11px;color:#333;font-weight:400;font-family:'Liberation Sans',sans-serif;letter-spacing:-0.184px;">1</div>
<div class="r" style="left:92px;top:263.9px;width:16.7px;height:16.7px;background:#dd4b39;border-radius:2px;"></div>
<svg class="r" style="left:96.5px;top:268.9px" width="8" height="8" viewBox="0 0 8 8"><path d="M.3 1.4h7.2M2.6 1.4V.4h2.6v1" fill="none" stroke="#fff" stroke-width="1"/><path d="M1.2 2.2h5.4l-.5 5.6H1.7z" fill="#fff"/><path d="M3.1 3.4v3.2M4.7 3.4v3.2" stroke="#eea79c" stroke-width=".9"/></svg>
<div class="r" style="left:109.2px;top:263.9px;width:12.7px;height:16.7px;background:#00c0ef;border-radius:2px;"></div>
<svg class="r" style="left:113px;top:268.9px" width="5" height="8" viewBox="0 0 5 8"><rect x="1.3" y=".1" width="2.4" height="1.9" fill="#fff"/><path d="M.6 2.8h2.9v3.7h.9v1.2H.6V6.5h.9V4h-.9z" fill="#fff"/></svg>
<div class="r" style="left:124.2px;top:263.9px;width:17.4px;height:16.7px;background:#f39c12;border-radius:2px;"></div>
<svg class="r" style="left:128px;top:268.9px" width="10" height="8" viewBox="0 0 10 8"><path d="M6.2 1H.7v6.2h6.6V4.6" fill="none" stroke="#fff" stroke-width="1.1"/><path d="M8.5.2l1.2 1.2-4.6 4.6-1.8.6.6-1.8z" fill="#fff"/></svg>
<div class="r" style="left:142.1px;top:263.9px;width:50.8px;height:16.7px;background:#00c0ef;border-radius:2px;"></div>
<svg class="r" style="left:146.8px;top:270.3px" width="10" height="6" viewBox="0 0 10 6"><path d="M.3 3C1.6 1 3.3.2 5 .2S8.4 1 9.7 3C8.4 5 6.7 5.8 5 5.8S1.6 5 .3 3z" fill="#fff"/><circle cx="5" cy="3" r="1.6" fill="#00c0ef"/><circle cx="5" cy="3" r=".8" fill="#fff"/></svg>
<div class="t" style="left:158.20px;top:267.93px;font-size:10px;line-height:10px;color:#fff;font-weight:700;font-family:'Liberation Serif',serif;letter-spacing:-0.960px;">Makbuz</div>
<div class="t" style="left:207.00px;top:266.59px;font-size:11px;line-height:11px;color:#333;font-weight:400;font-family:'Liberation Sans',sans-serif;letter-spacing:-0.706px;">PERVİZ AMANOV | SEVİNÇ MUSAYEVA</div>
<div class="t" style="left:449.00px;top:266.59px;font-size:11px;line-height:11px;color:#333;font-weight:400;font-family:'Liberation Sans',sans-serif;letter-spacing:-0.184px;">202207050055</div>
<div class="t" style="left:631.00px;top:266.59px;font-size:11px;line-height:11px;color:#333;font-weight:400;font-family:'Liberation Sans',sans-serif;letter-spacing:-0.161px;">05-07-2022 14:43:44</div>
<div class="t" style="left:810.00px;top:266.59px;font-size:11px;line-height:11px;color:#333;font-weight:400;font-family:'Liberation Sans',sans-serif;letter-spacing:-0.168px;">126,70</div>
<svg class="r" style="left:845.64px;top:267.9px" width="9" height="8" viewBox="0 0 9 8"><path d="M.8 8V5.4A3.7 3.7 0 0 1 8.2 5.4V8" fill="none" stroke="#333" stroke-width="1.05"/><path d="M4.5 0V8" stroke="#333" stroke-width="1.05"/></svg>
<div class="t" style="left:888.00px;top:266.59px;font-size:11px;line-height:11px;color:#333;font-weight:400;font-family:'Liberation Sans',sans-serif;letter-spacing:0.108px;">gelir</div>
<div class="t" style="left:955.00px;top:266.59px;font-size:11px;line-height:11px;color:#333;font-weight:400;font-family:'Liberation Sans',sans-serif;letter-spacing:-0.755px;">SEVİNÇ MUSAYEVA</div>
<div class="t" style="left:1096.00px;top:266.59px;font-size:11px;line-height:11px;color:#333;font-weight:400;font-family:'Liberation Sans',sans-serif;letter-spacing:0.050px;">( 10023 ) numaralı sipariş/fatura ödemesi</div>
<div class="r" style="left:56px;top:286.63px;width:1274px;height:31.63px;background:#f5f5f5;"></div>
<div class="r" style="left:56px;top:286.63px;width:1274px;height:1px;background:#f0f0f0;"></div>
<div class="t" style="left:63.00px;top:298.18px;font-size:11px;line-height:11px;color:#333;font-weight:400;font-family:'Liberation Sans',sans-serif;letter-spacing:-0.184px;">2</div>
<div class="r" style="left:92px;top:295.53px;width:16.7px;height:16.7px;background:#dd4b39;border-radius:2px;"></div>
<svg class="r" style="left:96.5px;top:300.53px" width="8" height="8" viewBox="0 0 8 8"><path d="M.3 1.4h7.2M2.6 1.4V.4h2.6v1" fill="none" stroke="#fff" stroke-width="1"/><path d="M1.2 2.2h5.4l-.5 5.6H1.7z" fill="#fff"/><path d="M3.1 3.4v3.2M4.7 3.4v3.2" stroke="#eea79c" stroke-width=".9"/></svg>
<div class="r" style="left:109.2px;top:295.53px;width:12.7px;height:16.7px;background:#00c0ef;border-radius:2px;"></div>
<svg class="r" style="left:113px;top:300.53px" width="5" height="8" viewBox="0 0 5 8"><rect x="1.3" y=".1" width="2.4" height="1.9" fill="#fff"/><path d="M.6 2.8h2.9v3.7h.9v1.2H.6V6.5h.9V4h-.9z" fill="#fff"/></svg>
<div class="r" style="left:124.2px;top:295.53px;width:17.4px;height:16.7px;background:#f39c12;border-radius:2px;"></div>
<svg class="r" style="left:128px;top:300.53px" width="10" height="8" viewBox="0 0 10 8"><path d="M6.2 1H.7v6.2h6.6V4.6" fill="none" stroke="#fff" stroke-width="1.1"/><path d="M8.5.2l1.2 1.2-4.6 4.6-1.8.6.6-1.8z" fill="#fff"/></svg>
<div class="r" style="left:142.1px;top:295.53px;width:50.8px;height:16.7px;background:#00c0ef;border-radius:2px;"></div>
<svg class="r" style="left:146.8px;top:301.93px" width="10" height="6" viewBox="0 0 10 6"><path d="M.3 3C1.6 1 3.3.2 5 .2S8.4 1 9.7 3C8.4 5 6.7 5.8 5 5.8S1.6 5 .3 3z" fill="#fff"/><circle cx="5" cy="3" r="1.6" fill="#00c0ef"/><circle cx="5" cy="3" r=".8" fill="#fff"/></svg>
<div class="t" style="left:158.20px;top:299.56px;font-size:10px;line-height:10px;color:#fff;font-weight:700;font-family:'Liberation Serif',serif;letter-spacing:-0.960px;">Makbuz</div>
<div class="t" style="left:207.00px;top:298.18px;font-size:11px;line-height:11px;color:#333;font-weight:400;font-family:'Liberation Sans',sans-serif;letter-spacing:-0.365px;">Samir Sixeliyev | SEVİNÇ MUSAYEVA</div>
<div class="t" style="left:449.00px;top:298.18px;font-size:11px;line-height:11px;color:#333;font-weight:400;font-family:'Liberation Sans',sans-serif;letter-spacing:-0.184px;">202207050054</div>
<div class="t" style="left:631.00px;top:298.18px;font-size:11px;line-height:11px;color:#333;font-weight:400;font-family:'Liberation Sans',sans-serif;letter-spacing:-0.161px;">05-07-2022 14:42:46</div>
<div class="t" style="left:810.00px;top:298.18px;font-size:11px;line-height:11px;color:#333;font-weight:400;font-family:'Liberation Sans',sans-serif;letter-spacing:-0.168px;">645,00</div>
<svg class="r" style="left:845.64px;top:299.49px" width="9" height="8" viewBox="0 0 9 8"><path d="M.8 8V5.4A3.7 3.7 0 0 1 8.2 5.4V8" fill="none" stroke="#333" stroke-width="1.05"/><path d="M4.5 0V8" stroke="#333" stroke-width="1.05"/></svg>
<div class="t" style="left:888.00px;top:298.18px;font-size:11px;line-height:11px;color:#333;font-weight:400;font-family:'Liberation Sans',sans-serif;letter-spacing:0.108px;">gelir</div>
<div class="t" style="left:955.00px;top:298.18px;font-size:11px;line-height:11px;color:#333;font-weight:400;font-family:'Liberation Sans',sans-serif;letter-spacing:-0.755px;">SEVİNÇ MUSAYEVA</div>
<div class="t" style="left:1096.00px;top:298.18px;font-size:11px;line-height:11px;color:#333;font-weight:400;font-family:'Liberation Sans',sans-serif;letter-spacing:0.050px;">( 10416 ) numaralı sipariş/fatura ödemesi</div>
<div class="r" style="left:56px;top:318.26px;width:1274px;height:31.63px;background:#f9f9f9;"></div>
<div class="r" style="left:56px;top:318.26px;width:1274px;height:1px;background:#f0f0f0;"></div>
<div class="t" style="left:63.00px;top:329.77px;font-size:11px;line-height:11px;color:#333;font-weight:400;font-family:'Liberation Sans',sans-serif;letter-spacing:-0.184px;">3</div>
<div class="r" style="left:92px;top:327.16px;width:16.7px;height:16.7px;background:#dd4b39;border-radius:2px;"></div>
<svg class="r" style="left:96.5px;top:332.16px" width="8" height="8" viewBox="0 0 8 8"><path d="M.3 1.4h7.2M2.6 1.4V.4h2.6v1" fill="none" stroke="#fff" stroke-width="1"/><path d="M1.2 2.2h5.4l-.5 5.6H1.7z" fill="#fff"/><path d="M3.1 3.4v3.2M4.7 3.4v3.2" stroke="#eea79c" stroke-width=".9"/></svg>
<div class="r" style="left:109.2px;top:327.16px;width:12.7px;height:16.7px;background:#00c0ef;border-radius:2px;"></div>
<svg class="r" style="left:113px;top:332.16px" width="5" height="8" viewBox="0 0 5 8"><rect x="1.3" y=".1" width="2.4" height="1.9" fill="#fff"/><path d="M.6 2.8h2.9v3.7h.9v1.2H.6V6.5h.9V4h-.9z" fill="#fff"/></svg>
<div class="r" style="left:124.2px;top:327.16px;width:17.4px;height:16.7px;background:#f39c12;border-radius:2px;"></div>
<svg class="r" style="left:128px;top:332.16px" width="10" height="8" viewBox="0 0 10 8"><path d="M6.2 1H.7v6.2h6.6V4.6" fill="none" stroke="#fff" stroke-width="1.1"/><path d="M8.5.2l1.2 1.2-4.6 4.6-1.8.6.6-1.8z" fill="#fff"/></svg>
<div class="r" style="left:142.1px;top:327.16px;width:50.8px;height:16.7px;background:#00c0ef;border-radius:2px;"></div>
<svg class="r" style="left:146.8px;top:333.56px" width="10" height="6" viewBox="0 0 10 6"><path d="M.3 3C1.6 1 3.3.2 5 .2S8.4 1 9.7 3C8.4 5 6.7 5.8 5 5.8S1.6 5 .3 3z" fill="#fff"/><circle cx="5" cy="3" r="1.6" fill="#00c0ef"/><circle cx="5" cy="3" r=".8" fill="#fff"/></svg>
<div class="t" style="left:158.20px;top:331.19px;font-size:10px;line-height:10px;color:#fff;font-weight:700;font-family:'Liberation Serif',serif;letter-spacing:-0.960px;">Makbuz</div>
<div class="t" style="left:207.00px;top:329.77px;font-size:11px;line-height:11px;color:#333;font-weight:400;font-family:'Liberation Sans',sans-serif;letter-spacing:-0.737px;">İSA HACIYEV | MERYEM SELÇUKLU</div>
<div class="t" style="left:449.00px;top:329.77px;font-size:11px;line-height:11px;color:#333;font-weight:400;font-family:'Liberation Sans',sans-serif;letter-spacing:-0.184px;">202207050053</div>
<div class="t" style="left:631.00px;top:329.77px;font-size:11px;line-height:11px;color:#333;font-weight:400;font-family:'Liberation Sans',sans-serif;letter-spacing:-0.161px;">05-07-2022 14:41:53</div>
<div class="t" style="left:810.00px;top:329.77px;font-size:11px;line-height:11px;color:#333;font-weight:400;font-family:'Liberation Sans',sans-serif;letter-spacing:-0.165px;">66,00</div>
<svg class="r" style="left:839.7px;top:331.08px" width="9" height="8" viewBox="0 0 9 8"><path d="M.8 8V5.4A3.7 3.7 0 0 1 8.2 5.4V8" fill="none" stroke="#333" stroke-width="1.05"/><path d="M4.5 0V8" stroke="#333" stroke-width="1.05"/></svg>
<div class="t" style="left:888.00px;top:329.77px;font-size:11px;line-height:11px;color:#333;font-weight:400;font-family:'Liberation Sans',sans-serif;letter-spacing:0.108px;">gelir</div>
<div class="t" style="left:955.00px;top:329.77px;font-size:11px;line-height:11px;color:#333;font-weight:400;font-family:'Liberation Sans',sans-serif;letter-spacing:-0.886px;">MERYEM SELÇUKLU</div>
<div class="t" style="left:1096.00px;top:329.77px;font-size:11px;line-height:11px;color:#333;font-weight:400;font-family:'Liberation Sans',sans-serif;letter-spacing:0.050px;">( 10426 ) numaralı sipariş/fatura ödemesi</div>
<div class="r" style="left:56px;top:349.89px;width:1274px;height:31.63px;background:#fff;"></div>
<div class="r" style="left:56px;top:349.89px;width:1274px;height:1px;background:#f0f0f0;"></div>
<div class="t" style="left:63.00px;top:361.36px;font-size:11px;line-height:11px;color:#333;font-weight:400;font-family:'Liberation Sans',sans-serif;letter-spacing:-0.184px;">4</div>
<div class="r" style="left:92px;top:358.79px;width:16.7px;height:16.7px;background:#dd4b39;border-radius:2px;"></div>
<svg class="r" style="left:96.5px;top:363.79px" width="8" height="8" viewBox="0 0 8 8"><path d="M.3 1.4h7.2M2.6 1.4V.4h2.6v1" fill="none" stroke="#fff" stroke-width="1"/><path d="M1.2 2.2h5.4l-.5 5.6H1.7z" fill="#fff"/><path d="M3.1 3.4v3.2M4.7 3.4v3.2" stroke="#eea79c" stroke-width=".9"/></svg>
<div class="r" style="left:109.2px;top:358.79px;width:12.7px;height:16.7px;background:#00c0ef;border-radius:2px;"></div>
<svg class="r" style="left:113px;top:363.79px" width="5" height="8" viewBox="0 0 5 8"><rect x="1.3" y=".1" width="2.4" height="1.9" fill="#fff"/><path d="M.6 2.8h2.9v3.7h.9v1.2H.6V6.5h.9V4h-.9z" fill="#fff"/></svg>
<div class="r" style="left:124.2px;top:358.79px;width:17.4px;height:16.7px;background:#f39c12;border-radius:2px;"></div>
<svg class="r" style="left:128px;top:363.79px" width="10" height="8" viewBox="0 0 10 8"><path d="M6.2 1H.7v6.2h6.6V4.6" fill="none" stroke="#fff" stroke-width="1.1"/><path d="M8.5.2l1.2 1.2-4.6 4.6-1.8.6.6-1.8z" fill="#fff"/></svg>
<div class="r" style="left:142.1px;top:358.79px;width:50.8px;height:16.7px;background:#00c0ef;border-radius:2px;"></div>
<svg class="r" style="left:146.8px;top:365.19px" width="10" height="6" viewBox="0 0 10 6"><path d="M.3 3C1.6 1 3.3.2 5 .2S8.4 1 9.7 3C8.4 5 6.7 5.8 5 5.8S1.6 5 .3 3z" fill="#fff"/><circle cx="5" cy="3" r="1.6" fill="#00c0ef"/><circle cx="5" cy="3" r=".8" fill="#fff"/></svg>
<div class="t" style="left:158.20px;top:362.81px;font-size:10px;line-height:10px;color:#fff;font-weight:700;font-family:'Liberation Serif',serif;letter-spacing:-0.960px;">Makbuz</div>
<div class="t" style="left:207.00px;top:361.36px;font-size:11px;line-height:11px;color:#333;font-weight:400;font-family:'Liberation Sans',sans-serif;letter-spacing:-0.359px;">Ilham Dərnəgül | SEVİNÇ MUSAYEVA</div>
<div class="t" style="left:449.00px;top:361.36px;font-size:11px;line-height:11px;color:#333;font-weight:400;font-family:'Liberation Sans',sans-serif;letter-spacing:-0.184px;">202207050052</div>
<div class="t" style="left:631.00px;top:361.36px;font-size:11px;line-height:11px;color:#333;font-weight:400;font-family:'Liberation Sans',sans-serif;letter-spacing:-0.161px;">05-07-2022 14:35:47</div>
<div class="t" style="left:810.00px;top:361.36px;font-size:11px;line-height:11px;color:#333;font-weight:400;font-family:'Liberation Sans',sans-serif;letter-spacing:-0.165px;">29,00</div>
<svg class="r" style="left:839.7px;top:362.67px" width="9" height="8" viewBox="0 0 9 8"><path d="M.8 8V5.4A3.7 3.7 0 0 1 8.2 5.4V8" fill="none" stroke="#333" stroke-width="1.05"/><path d="M4.5 0V8" stroke="#333" stroke-width="1.05"/></svg>
<div class="t" style="left:888.00px;top:361.36px;font-size:11px;line-height:11px;color:#333;font-weight:400;font-family:'Liberation Sans',sans-serif;letter-spacing:0.108px;">gelir</div>
<div class="t" style="left:955.00px;top:361.36px;font-size:11px;line-height:11px;color:#333;font-weight:400;font-family:'Liberation Sans',sans-serif;letter-spacing:-0.755px;">SEVİNÇ MUSAYEVA</div>
<div class="r" style="left:56px;top:381.52px;width:1274px;height:31.63px;background:#f9f9f9;"></div>
<div class="r" style="left:56px;top:381.52px;width:1274px;height:1px;background:#f0f0f0;"></div>
<div class="t" style="left:63.00px;top:392.95px;font-size:11px;line-height:11px;color:#333;font-weight:400;font-family:'Liberation Sans',sans-serif;letter-spacing:-0.184px;">5</div>
<div class="r" style="left:92px;top:390.42px;width:16.7px;height:16.7px;background:#dd4b39;border-radius:2px;"></div>
<svg class="r" style="left:96.5px;top:395.42px" width="8" height="8" viewBox="0 0 8 8"><path d="M.3 1.4h7.2M2.6 1.4V.4h2.6v1" fill="none" stroke="#fff" stroke-width="1"/><path d="M1.2 2.2h5.4l-.5 5.6H1.7z" fill="#fff"/><path d="M3.1 3.4v3.2M4.7 3.4v3.2" stroke="#eea79c" stroke-width=".9"/></svg>
<div class="r" style="left:109.2px;top:390.42px;width:12.7px;height:16.7px;background:#00c0ef;border-radius:2px;"></div>
<svg class="r" style="left:113px;top:395.42px" width="5" height="8" viewBox="0 0 5 8"><rect x="1.3" y=".1" width="2.4" height="1.9" fill="#fff"/><path d="M.6 2.8h2.9v3.7h.9v1.2H.6V6.5h.9V4h-.9z" fill="#fff"/></svg>
<div class="r" style="left:124.2px;top:390.42px;width:17.4px;height:16.7px;background:#f39c12;border-radius:2px;"></div>
<svg class="r" style="left:128px;top:395.42px" width="10" height="8" viewBox="0 0 10 8"><path d="M6.2 1H.7v6.2h6.6V4.6" fill="none" stroke="#fff" stroke-width="1.1"/><path d="M8.5.2l1.2 1.2-4.6 4.6-1.8.6.6-1.8z" fill="#fff"/></svg>
<div class="r" style="left:142.1px;top:390.42px;width:50.8px;height:16.7px;background:#00c0ef;border-radius:2px;"></div>
<svg class="r" style="left:146.8px;top:396.82px" width="10" height="6" viewBox="0 0 10 6"><path d="M.3 3C1.6 1 3.3.2 5 .2S8.4 1 9.7 3C8.4 5 6.7 5.8 5 5.8S1.6 5 .3 3z" fill="#fff"/><circle cx="5" cy="3" r="1.6" fill="#00c0ef"/><circle cx="5" cy="3" r=".8" fill="#fff"/></svg>
<div class="t" style="left:158.20px;top:394.44px;font-size:10px;line-height:10px;color:#fff;font-weight:700;font-family:'Liberation Serif',serif;letter-spacing:-0.960px;">Makbuz</div>
<div class="t" style="left:207.00px;top:392.95px;font-size:11px;line-height:11px;color:#333;font-weight:400;font-family:'Liberation Sans',sans-serif;letter-spacing:-0.701px;">FUAD ABDULLAYEV | SEVİNÇ MUSAYEVA</div>
<div class="t" style="left:449.00px;top:392.95px;font-size:11px;line-height:11px;color:#333;font-weight:400;font-family:'Liberation Sans',sans-serif;letter-spacing:-0.184px;">202207050051</div>
<div class="t" style="left:631.00px;top:392.95px;font-size:11px;line-height:11px;color:#333;font-weight:400;font-family:'Liberation Sans',sans-serif;letter-spacing:-0.161px;">05-07-2022 14:28:32</div>
<div class="t" style="left:810.00px;top:392.95px;font-size:11px;line-height:11px;color:#333;font-weight:400;font-family:'Liberation Sans',sans-serif;letter-spacing:-0.165px;">57,00</div>
<svg class="r" style="left:839.7px;top:394.26px" width="9" height="8" viewBox="0 0 9 8"><path d="M.8 8V5.4A3.7 3.7 0 0 1 8.2 5.4V8" fill="none" stroke="#333" stroke-width="1.05"/><path d="M4.5 0V8" stroke="#333" stroke-width="1.05"/></svg>
<div class="t" style="left:888.00px;top:392.95px;font-size:11px;line-height:11px;color:#333;font-weight:400;font-family:'Liberation Sans',sans-serif;letter-spacing:0.108px;">gelir</div>
<div class="t" style="left:955.00px;top:392.95px;font-size:11px;line-height:11px;color:#333;font-weight:400;font-family:'Liberation Sans',sans-serif;letter-spacing:-0.755px;">SEVİNÇ MUSAYEVA</div>
<div class="t" style="left:1096.00px;top:392.95px;font-size:11px;line-height:11px;color:#333;font-weight:400;font-family:'Liberation Sans',sans-serif;letter-spacing:0.050px;">( 10423 ) numaralı sipariş/fatura ödemesi</div>
<div class="r" style="left:56px;top:413.15px;width:1274px;height:31.63px;background:#fff;"></div>
<div class="r" style="left:56px;top:413.15px;width:1274px;height:1px;background:#f0f0f0;"></div>
<div class="t" style="left:63.00px;top:424.54px;font-size:11px;line-height:11px;color:#333;font-weight:400;font-family:'Liberation Sans',sans-serif;letter-spacing:-0.184px;">6</div>
<div class="r" style="left:92px;top:422.05px;width:16.7px;height:16.7px;background:#dd4b39;border-radius:2px;"></div>
<svg class="r" style="left:96.5px;top:427.05px" width="8" height="8" viewBox="0 0 8 8"><path d="M.3 1.4h7.2M2.6 1.4V.4h2.6v1" fill="none" stroke="#fff" stroke-width="1"/><path d="M1.2 2.2h5.4l-.5 5.6H1.7z" fill="#fff"/><path d="M3.1 3.4v3.2M4.7 3.4v3.2" stroke="#eea79c" stroke-width=".9"/></svg>
<div class="r" style="left:109.2px;top:422.05px;width:12.7px;height:16.7px;background:#00c0ef;border-radius:2px;"></div>
<svg class="r" style="left:113px;top:427.05px" width="5" height="8" viewBox="0 0 5 8"><rect x="1.3" y=".1" width="2.4" height="1.9" fill="#fff"/><path d="M.6 2.8h2.9v3.7h.9v1.2H.6V6.5h.9V4h-.9z" fill="#fff"/></svg>
<div class="r" style="left:124.2px;top:422.05px;width:17.4px;height:16.7px;background:#f39c12;border-radius:2px;"></div>
<svg class="r" style="left:128px;top:427.05px" width="10" height="8" viewBox="0 0 10 8"><path d="M6.2 1H.7v6.2h6.6V4.6" fill="none" stroke="#fff" stroke-width="1.1"/><path d="M8.5.2l1.2 1.2-4.6 4.6-1.8.6.6-1.8z" fill="#fff"/></svg>
<div class="r" style="left:142.1px;top:422.05px;width:50.8px;height:16.7px;background:#00c0ef;border-radius:2px;"></div>
<svg class="r" style="left:146.8px;top:428.45px" width="10" height="6" viewBox="0 0 10 6"><path d="M.3 3C1.6 1 3.3.2 5 .2S8.4 1 9.7 3C8.4 5 6.7 5.8 5 5.8S1.6 5 .3 3z" fill="#fff"/><circle cx="5" cy="3" r="1.6" fill="#00c0ef"/><circle cx="5" cy="3" r=".8" fill="#fff"/></svg>
<div class="t" style="left:158.20px;top:426.07px;font-size:10px;line-height:10px;color:#fff;font-weight:700;font-family:'Liberation Serif',serif;letter-spacing:-0.960px;">Makbuz</div>
<div class="t" style="left:207.00px;top:424.54px;font-size:11px;line-height:11px;color:#333;font-weight:400;font-family:'Liberation Sans',sans-serif;letter-spacing:-0.667px;">PAŞAYEV ELİYUSİF | SEVİNÇ MUSAYEVA</div>
<div class="t" style="left:449.00px;top:424.54px;font-size:11px;line-height:11px;color:#333;font-weight:400;font-family:'Liberation Sans',sans-serif;letter-spacing:-0.184px;">202207050050</div>
<div class="t" style="left:631.00px;top:424.54px;font-size:11px;line-height:11px;color:#333;font-weight:400;font-family:'Liberation Sans',sans-serif;letter-spacing:-0.161px;">05-07-2022 14:27:55</div>
<div class="t" style="left:810.00px;top:424.54px;font-size:11px;line-height:11px;color:#333;font-weight:400;font-family:'Liberation Sans',sans-serif;letter-spacing:-0.168px;">299,00</div>
<svg class="r" style="left:845.64px;top:425.85px" width="9" height="8" viewBox="0 0 9 8"><path d="M.8 8V5.4A3.7 3.7 0 0 1 8.2 5.4V8" fill="none" stroke="#333" stroke-width="1.05"/><path d="M4.5 0V8" stroke="#333" stroke-width="1.05"/></svg>
<div class="t" style="left:888.00px;top:424.54px;font-size:11px;line-height:11px;color:#333;font-weight:400;font-family:'Liberation Sans',sans-serif;letter-spacing:0.108px;">gelir</div>
<div class="t" style="left:955.00px;top:424.54px;font-size:11px;line-height:11px;color:#333;font-weight:400;font-family:'Liberation Sans',sans-serif;letter-spacing:-0.755px;">SEVİNÇ MUSAYEVA</div>
<div class="t" style="left:1096.00px;top:424.54px;font-size:11px;line-height:11px;color:#333;font-weight:400;font-family:'Liberation Sans',sans-serif;letter-spacing:0.050px;">( 10421 ) numaralı sipariş/fatura ödemesi</div>
<div class="r" style="left:56px;top:444.78px;width:1274px;height:31.63px;background:#f9f9f9;"></div>
<div class="r" style="left:56px;top:444.78px;width:1274px;height:1px;background:#f0f0f0;"></div>
<div class="t" style="left:63.00px;top:456.13px;font-size:11px;line-height:11px;color:#333;font-weight:400;font-family:'Liberation Sans',sans-serif;letter-spacing:-0.184px;">7</div>
<div class="r" style="left:92px;top:453.68px;width:16.7px;height:16.7px;background:#dd4b39;border-radius:2px;"></div>
<svg class="r" style="left:96.5px;top:458.68px" width="8" height="8" viewBox="0 0 8 8"><path d="M.3 1.4h7.2M2.6 1.4V.4h2.6v1" fill="none" stroke="#fff" stroke-width="1"/><path d="M1.2 2.2h5.4l-.5 5.6H1.7z" fill="#fff"/><path d="M3.1 3.4v3.2M4.7 3.4v3.2" stroke="#eea79c" stroke-width=".9"/></svg>
<div class="r" style="left:109.2px;top:453.68px;width:12.7px;height:16.7px;background:#00c0ef;border-radius:2px;"></div>
<svg class="r" style="left:113px;top:458.68px" width="5" height="8" viewBox="0 0 5 8"><rect x="1.3" y=".1" width="2.4" height="1.9" fill="#fff"/><path d="M.6 2.8h2.9v3.7h.9v1.2H.6V6.5h.9V4h-.9z" fill="#fff"/></svg>
<div class="r" style="left:124.2px;top:453.68px;width:17.4px;height:16.7px;background:#f39c12;border-radius:2px;"></div>
<svg class="r" style="left:128px;top:458.68px" width="10" height="8" viewBox="0 0 10 8"><path d="M6.2 1H.7v6.2h6.6V4.6" fill="none" stroke="#fff" stroke-width="1.1"/><path d="M8.5.2l1.2 1.2-4.6 4.6-1.8.6.6-1.8z" fill="#fff"/></svg>
<div class="r" style="left:142.1px;top:453.68px;width:50.8px;height:16.7px;background:#00c0ef;border-radius:2px;"></div>
<svg class="r" style="left:146.8px;top:460.08px" width="10" height="6" viewBox="0 0 10 6"><path d="M.3 3C1.6 1 3.3.2 5 .2S8.4 1 9.7 3C8.4 5 6.7 5.8 5 5.8S1.6 5 .3 3z" fill="#fff"/><circle cx="5" cy="3" r="1.6" fill="#00c0ef"/><circle cx="5" cy="3" r=".8" fill="#fff"/></svg>
<div class="t" style="left:158.20px;top:457.70px;font-size:10px;line-height:10px;color:#fff;font-weight:700;font-family:'Liberation Serif',serif;letter-spacing:-0.960px;">Makbuz</div>
<div class="t" style="left:207.00px;top:456.13px;font-size:11px;line-height:11px;color:#333;font-weight:400;font-family:'Liberation Sans',sans-serif;letter-spacing:-0.311px;">Nihad şərq bazarı | SEVİNÇ MUSAYEVA</div>
<div class="t" style="left:449.00px;top:456.13px;font-size:11px;line-height:11px;color:#333;font-weight:400;font-family:'Liberation Sans',sans-serif;letter-spacing:-0.184px;">202207050049</div>
<div class="t" style="left:631.00px;top:456.13px;font-size:11px;line-height:11px;color:#333;font-weight:400;font-family:'Liberation Sans',sans-serif;letter-spacing:-0.161px;">05-07-2022 14:15:00</div>
<div class="t" style="left:810.00px;top:456.13px;font-size:11px;line-height:11px;color:#333;font-weight:400;font-family:'Liberation Sans',sans-serif;letter-spacing:-0.165px;">85,70</div>
<svg class="r" style="left:839.7px;top:457.44px" width="9" height="8" viewBox="0 0 9 8"><path d="M.8 8V5.4A3.7 3.7 0 0 1 8.2 5.4V8" fill="none" stroke="#333" stroke-width="1.05"/><path d="M4.5 0V8" stroke="#333" stroke-width="1.05"/></svg>
<div class="t" style="left:888.00px;top:456.13px;font-size:11px;line-height:11px;color:#333;font-weight:400;font-family:'Liberation Sans',sans-serif;letter-spacing:0.108px;">gelir</div>
<div class="t" style="left:955.00px;top:456.13px;font-size:11px;line-height:11px;color:#333;font-weight:400;font-family:'Liberation Sans',sans-serif;letter-spacing:-0.755px;">SEVİNÇ MUSAYEVA</div>
<div class="t" style="left:1096.00px;top:456.13px;font-size:11px;line-height:11px;color:#333;font-weight:400;font-family:'Liberation Sans',sans-serif;letter-spacing:0.056px;">( 4832 ) numaralı sipariş/fatura ödemesi</div>
<div class="r" style="left:56px;top:476.41px;width:1274px;height:31.63px;background:#fff;"></div>
<div class="r" style="left:56px;top:476.41px;width:1274px;height:1px;background:#f0f0f0;"></div>
<div class="t" style="left:63.00px;top:487.72px;font-size:11px;line-height:11px;color:#333;font-weight:400;font-family:'Liberation Sans',sans-serif;letter-spacing:-0.184px;">8</div>
<div class="r" style="left:92px;top:485.31px;width:16.7px;height:16.7px;background:#dd4b39;border-radius:2px;"></div>
<svg class="r" style="left:96.5px;top:490.31px" width="8" height="8" viewBox="0 0 8 8"><path d="M.3 1.4h7.2M2.6 1.4V.4h2.6v1" fill="none" stroke="#fff" stroke-width="1"/><path d="M1.2 2.2h5.4l-.5 5.6H1.7z" fill="#fff"/><path d="M3.1 3.4v3.2M4.7 3.4v3.2" stroke="#eea79c" stroke-width=".9"/></svg>
<div class="r" style="left:109.2px;top:485.31px;width:12.7px;height:16.7px;background:#00c0ef;border-radius:2px;"></div>
<svg class="r" style="left:113px;top:490.31px" width="5" height="8" viewBox="0 0 5 8"><rect x="1.3" y=".1" width="2.4" height="1.9" fill="#fff"/><path d="M.6 2.8h2.9v3.7h.9v1.2H.6V6.5h.9V4h-.9z" fill="#fff"/></svg>
<div class="r" style="left:124.2px;top:485.31px;width:17.4px;height:16.7px;background:#f39c12;border-radius:2px;"></div>
<svg class="r" style="left:128px;top:490.31px" width="10" height="8" viewBox="0 0 10 8"><path d="M6.2 1H.7v6.2h6.6V4.6" fill="none" stroke="#fff" stroke-width="1.1"/><path d="M8.5.2l1.2 1.2-4.6 4.6-1.8.6.6-1.8z" fill="#fff"/></svg>
<div class="r" style="left:142.1px;top:485.31px;width:50.8px;height:16.7px;background:#00c0ef;border-radius:2px;"></div>
<svg class="r" style="left:146.8px;top:491.71px" width="10" height="6" viewBox="0 0 10 6"><path d="M.3 3C1.6 1 3.3.2 5 .2S8.4 1 9.7 3C8.4 5 6.7 5.8 5 5.8S1.6 5 .3 3z" fill="#fff"/><circle cx="5" cy="3" r="1.6" fill="#00c0ef"/><circle cx="5" cy="3" r=".8" fill="#fff"/></svg>
<div class="t" style="left:158.20px;top:489.33px;font-size:10px;line-height:10px;color:#fff;font-weight:700;font-family:'Liberation Serif',serif;letter-spacing:-0.960px;">Makbuz</div>
<div class="t" style="left:207.00px;top:487.72px;font-size:11px;line-height:11px;color:#333;font-weight:400;font-family:'Liberation Sans',sans-serif;letter-spacing:-0.411px;">Ağa Dərnəgül | SEVİNÇ MUSAYEVA</div>
<div class="t" style="left:449.00px;top:487.72px;font-size:11px;line-height:11px;color:#333;font-weight:400;font-family:'Liberation Sans',sans-serif;letter-spacing:-0.184px;">202207050048</div>
<div class="t" style="left:631.00px;top:487.72px;font-size:11px;line-height:11px;color:#333;font-weight:400;font-family:'Liberation Sans',sans-serif;letter-spacing:-0.161px;">05-07-2022 14:12:34</div>
<div class="t" style="left:810.00px;top:487.72px;font-size:11px;line-height:11px;color:#333;font-weight:400;font-family:'Liberation Sans',sans-serif;letter-spacing:-0.165px;">33,00</div>
<svg class="r" style="left:839.7px;top:489.03px" width="9" height="8" viewBox="0 0 9 8"><path d="M.8 8V5.4A3.7 3.7 0 0 1 8.2 5.4V8" fill="none" stroke="#333" stroke-width="1.05"/><path d="M4.5 0V8" stroke="#333" stroke-width="1.05"/></svg>
<div class="t" style="left:888.00px;top:487.72px;font-size:11px;line-height:11px;color:#333;font-weight:400;font-family:'Liberation Sans',sans-serif;letter-spacing:0.108px;">gelir</div>
<div class="t" style="left:955.00px;top:487.72px;font-size:11px;line-height:11px;color:#333;font-weight:400;font-family:'Liberation Sans',sans-serif;letter-spacing:-0.755px;">SEVİNÇ MUSAYEVA</div>
<div class="r" style="left:56px;top:508.04px;width:1274px;height:31.63px;background:#f9f9f9;"></div>
<div class="r" style="left:56px;top:508.04px;width:1274px;height:1px;background:#f0f0f0;"></div>
<div class="t" style="left:63.00px;top:519.31px;font-size:11px;line-height:11px;color:#333;font-weight:400;font-family:'Liberation Sans',sans-serif;letter-spacing:-0.184px;">9</div>
<div class="r" style="left:92px;top:516.94px;width:16.7px;height:16.7px;background:#dd4b39;border-radius:2px;"></div>
<svg class="r" style="left:96.5px;top:521.94px" width="8" height="8" viewBox="0 0 8 8"><path d="M.3 1.4h7.2M2.6 1.4V.4h2.6v1" fill="none" stroke="#fff" stroke-width="1"/><path d="M1.2 2.2h5.4l-.5 5.6H1.7z" fill="#fff"/><path d="M3.1 3.4v3.2M4.7 3.4v3.2" stroke="#eea79c" stroke-width=".9"/></svg>
<div class="r" style="left:109.2px;top:516.94px;width:12.7px;height:16.7px;background:#00c0ef;border-radius:2px;"></div>
<svg class="r" style="left:113px;top:521.94px" width="5" height="8" viewBox="0 0 5 8"><rect x="1.3" y=".1" width="2.4" height="1.9" fill="#fff"/><path d="M.6 2.8h2.9v3.7h.9v1.2H.6V6.5h.9V4h-.9z" fill="#fff"/></svg>
<div class="r" style="left:124.2px;top:516.94px;width:17.4px;height:16.7px;background:#f39c12;border-radius:2px;"></div>
<svg class="r" style="left:128px;top:521.94px" width="10" height="8" viewBox="0 0 10 8"><path d="M6.2 1H.7v6.2h6.6V4.6" fill="none" stroke="#fff" stroke-width="1.1"/><path d="M8.5.2l1.2 1.2-4.6 4.6-1.8.6.6-1.8z" fill="#fff"/></svg>
<div class="r" style="left:142.1px;top:516.94px;width:50.8px;height:16.7px;background:#00c0ef;border-radius:2px;"></div>
<svg class="r" style="left:146.8px;top:523.34px" width="10" height="6" viewBox="0 0 10 6"><path d="M.3 3C1.6 1 3.3.2 5 .2S8.4 1 9.7 3C8.4 5 6.7 5.8 5 5.8S1.6 5 .3 3z" fill="#fff"/><circle cx="5" cy="3" r="1.6" fill="#00c0ef"/><circle cx="5" cy="3" r=".8" fill="#fff"/></svg>
<div class="t" style="left:158.20px;top:520.97px;font-size:10px;line-height:10px;color:#fff;font-weight:700;font-family:'Liberation Serif',serif;letter-spacing:-0.960px;">Makbuz</div>
<div class="t" style="left:207.00px;top:519.31px;font-size:11px;line-height:11px;color:#333;font-weight:400;font-family:'Liberation Sans',sans-serif;letter-spacing:-0.367px;">Glorya insaat | SEVİNÇ MUSAYEVA</div>
<div class="t" style="left:449.00px;top:519.31px;font-size:11px;line-height:11px;color:#333;font-weight:400;font-family:'Liberation Sans',sans-serif;letter-spacing:-0.184px;">202207050047</div>
<div class="t" style="left:631.00px;top:519.31px;font-size:11px;line-height:11px;color:#333;font-weight:400;font-family:'Liberation Sans',sans-serif;letter-spacing:-0.118px;">05-07-2022 14:11:20</div>
<div class="t" style="left:810.00px;top:519.31px;font-size:11px;line-height:11px;color:#333;font-weight:400;font-family:'Liberation Sans',sans-serif;letter-spacing:-0.161px;">5,50</div>
<svg class="r" style="left:833.77px;top:520.62px" width="9" height="8" viewBox="0 0 9 8"><path d="M.8 8V5.4A3.7 3.7 0 0 1 8.2 5.4V8" fill="none" stroke="#333" stroke-width="1.05"/><path d="M4.5 0V8" stroke="#333" stroke-width="1.05"/></svg>
<div class="t" style="left:888.00px;top:519.31px;font-size:11px;line-height:11px;color:#333;font-weight:400;font-family:'Liberation Sans',sans-serif;letter-spacing:0.108px;">gelir</div>
<div class="t" style="left:955.00px;top:519.31px;font-size:11px;line-height:11px;color:#333;font-weight:400;font-family:'Liberation Sans',sans-serif;letter-spacing:-0.755px;">SEVİNÇ MUSAYEVA</div>
<div class="r" style="left:56px;top:539.67px;width:1274px;height:31.63px;background:#fff;"></div>
<div class="r" style="left:56px;top:539.67px;width:1274px;height:1px;background:#f0f0f0;"></div>
<div class="t" style="left:63.00px;top:550.90px;font-size:11px;line-height:11px;color:#333;font-weight:400;font-family:'Liberation Sans',sans-serif;letter-spacing:-0.184px;">10</div>
<div class="r" style="left:92px;top:548.57px;width:16.7px;height:16.7px;background:#dd4b39;border-radius:2px;"></div>
<svg class="r" style="left:96.5px;top:553.57px" width="8" height="8" viewBox="0 0 8 8"><path d="M.3 1.4h7.2M2.6 1.4V.4h2.6v1" fill="none" stroke="#fff" stroke-width="1"/><path d="M1.2 2.2h5.4l-.5 5.6H1.7z" fill="#fff"/><path d="M3.1 3.4v3.2M4.7 3.4v3.2" stroke="#eea79c" stroke-width=".9"/></svg>
<div class="r" style="left:109.2px;top:548.57px;width:12.7px;height:16.7px;background:#00c0ef;border-radius:2px;"></div>
<svg class="r" style="left:113px;top:553.57px" width="5" height="8" viewBox="0 0 5 8"><rect x="1.3" y=".1" width="2.4" height="1.9" fill="#fff"/><path d="M.6 2.8h2.9v3.7h.9v1.2H.6V6.5h.9V4h-.9z" fill="#fff"/></svg>
<div class="r" style="left:124.2px;top:548.57px;width:17.4px;height:16.7px;background:#f39c12;border-radius:2px;"></div>
<svg class="r" style="left:128px;top:553.57px" width="10" height="8" viewBox="0 0 10 8"><path d="M6.2 1H.7v6.2h6.6V4.6" fill="none" stroke="#fff" stroke-width="1.1"/><path d="M8.5.2l1.2 1.2-4.6 4.6-1.8.6.6-1.8z" fill="#fff"/></svg>
<div class="r" style="left:142.1px;top:548.57px;width:50.8px;height:16.7px;background:#00c0ef;border-radius:2px;"></div>
<svg class="r" style="left:146.8px;top:554.97px" width="10" height="6" viewBox="0 0 10 6"><path d="M.3 3C1.6 1 3.3.2 5 .2S8.4 1 9.7 3C8.4 5 6.7 5.8 5 5.8S1.6 5 .3 3z" fill="#fff"/><circle cx="5" cy="3" r="1.6" fill="#00c0ef"/><circle cx="5" cy="3" r=".8" fill="#fff"/></svg>
<div class="t" style="left:158.20px;top:552.60px;font-size:10px;line-height:10px;color:#fff;font-weight:700;font-family:'Liberation Serif',serif;letter-spacing:-0.960px;">Makbuz</div>
<div class="t" style="left:207.00px;top:550.90px;font-size:11px;line-height:11px;color:#333;font-weight:400;font-family:'Liberation Sans',sans-serif;letter-spacing:-0.674px;">ELVIN NEBIYEV | SEVİNÇ MUSAYEVA</div>
<div class="t" style="left:449.00px;top:550.90px;font-size:11px;line-height:11px;color:#333;font-weight:400;font-family:'Liberation Sans',sans-serif;letter-spacing:-0.184px;">202207050046</div>
<div class="t" style="left:631.00px;top:550.90px;font-size:11px;line-height:11px;color:#333;font-weight:400;font-family:'Liberation Sans',sans-serif;letter-spacing:-0.161px;">05-07-2022 14:10:34</div>
<div class="t" style="left:810.00px;top:550.90px;font-size:11px;line-height:11px;color:#333;font-weight:400;font-family:'Liberation Sans',sans-serif;letter-spacing:-0.165px;">19,00</div>
<svg class="r" style="left:839.7px;top:552.21px" width="9" height="8" viewBox="0 0 9 8"><path d="M.8 8V5.4A3.7 3.7 0 0 1 8.2 5.4V8" fill="none" stroke="#333" stroke-width="1.05"/><path d="M4.5 0V8" stroke="#333" stroke-width="1.05"/></svg>
<div class="t" style="left:888.00px;top:550.90px;font-size:11px;line-height:11px;color:#333;font-weight:400;font-family:'Liberation Sans',sans-serif;letter-spacing:0.108px;">gelir</div>
<div class="t" style="left:955.00px;top:550.90px;font-size:11px;line-height:11px;color:#333;font-weight:400;font-family:'Liberation Sans',sans-serif;letter-spacing:-0.755px;">SEVİNÇ MUSAYEVA</div>
<div class="t" style="left:1096.00px;top:550.90px;font-size:11px;line-height:11px;color:#333;font-weight:400;font-family:'Liberation Sans',sans-serif;letter-spacing:0.056px;">( 7039 ) numaralı sipariş/fatura ödemesi</div>
<div class="r" style="left:56px;top:571.3px;width:1274px;height:31.63px;background:#f9f9f9;"></div>
<div class="r" style="left:56px;top:571.3px;width:1274px;height:1px;background:#f0f0f0;"></div>
<div class="t" style="left:63.00px;top:582.49px;font-size:11px;line-height:11px;color:#333;font-weight:400;font-family:'Liberation Sans',sans-serif;letter-spacing:0.225px;">11</div>
<div class="r" style="left:92px;top:580.2px;width:16.7px;height:16.7px;background:#dd4b39;border-radius:2px;"></div>
<svg class="r" style="left:96.5px;top:585.2px" width="8" height="8" viewBox="0 0 8 8"><path d="M.3 1.4h7.2M2.6 1.4V.4h2.6v1" fill="none" stroke="#fff" stroke-width="1"/><path d="M1.2 2.2h5.4l-.5 5.6H1.7z" fill="#fff"/><path d="M3.1 3.4v3.2M4.7 3.4v3.2" stroke="#eea79c" stroke-width=".9"/></svg>
<div class="r" style="left:109.2px;top:580.2px;width:12.7px;height:16.7px;background:#00c0ef;border-radius:2px;"></div>
<svg class="r" style="left:113px;top:585.2px" width="5" height="8" viewBox="0 0 5 8"><rect x="1.3" y=".1" width="2.4" height="1.9" fill="#fff"/><path d="M.6 2.8h2.9v3.7h.9v1.2H.6V6.5h.9V4h-.9z" fill="#fff"/></svg>
<div class="r" style="left:124.2px;top:580.2px;width:17.4px;height:16.7px;background:#f39c12;border-radius:2px;"></div>
<svg class="r" style="left:128px;top:585.2px" width="10" height="8" viewBox="0 0 10 8"><path d="M6.2 1H.7v6.2h6.6V4.6" fill="none" stroke="#fff" stroke-width="1.1"/><path d="M8.5.2l1.2 1.2-4.6 4.6-1.8.6.6-1.8z" fill="#fff"/></svg>
<div class="r" style="left:142.1px;top:580.2px;width:50.8px;height:16.7px;background:#00c0ef;border-radius:2px;"></div>
<svg class="r" style="left:146.8px;top:586.6px" width="10" height="6" viewBox="0 0 10 6"><path d="M.3 3C1.6 1 3.3.2 5 .2S8.4 1 9.7 3C8.4 5 6.7 5.8 5 5.8S1.6 5 .3 3z" fill="#fff"/><circle cx="5" cy="3" r="1.6" fill="#00c0ef"/><circle cx="5" cy="3" r=".8" fill="#fff"/></svg>
<div class="t" style="left:158.20px;top:584.23px;font-size:10px;line-height:10px;color:#fff;font-weight:700;font-family:'Liberation Serif',serif;letter-spacing:-0.960px;">Makbuz</div>
<div class="t" style="left:207.00px;top:582.49px;font-size:11px;line-height:11px;color:#333;font-weight:400;font-family:'Liberation Sans',sans-serif;letter-spacing:-0.676px;">CƏMİL | SEVİNÇ MUSAYEVA</div>
<div class="t" style="left:449.00px;top:582.49px;font-size:11px;line-height:11px;color:#333;font-weight:400;font-family:'Liberation Sans',sans-serif;letter-spacing:-0.184px;">202207050045</div>
<div class="t" style="left:631.00px;top:582.49px;font-size:11px;line-height:11px;color:#333;font-weight:400;font-family:'Liberation Sans',sans-serif;letter-spacing:-0.161px;">05-07-2022 14:09:46</div>
<div class="t" style="left:810.00px;top:582.49px;font-size:11px;line-height:11px;color:#333;font-weight:400;font-family:'Liberation Sans',sans-serif;letter-spacing:-0.165px;">81,00</div>
<svg class="r" style="left:839.7px;top:583.8px" width="9" height="8" viewBox="0 0 9 8"><path d="M.8 8V5.4A3.7 3.7 0 0 1 8.2 5.4V8" fill="none" stroke="#333" stroke-width="1.05"/><path d="M4.5 0V8" stroke="#333" stroke-width="1.05"/></svg>
<div class="t" style="left:888.00px;top:582.49px;font-size:11px;line-height:11px;color:#333;font-weight:400;font-family:'Liberation Sans',sans-serif;letter-spacing:0.108px;">gelir</div>
<div class="t" style="left:955.00px;top:582.49px;font-size:11px;line-height:11px;color:#333;font-weight:400;font-family:'Liberation Sans',sans-serif;letter-spacing:-0.755px;">SEVİNÇ MUSAYEVA</div>
<div class="t" style="left:1096.00px;top:582.49px;font-size:11px;line-height:11px;color:#333;font-weight:400;font-family:'Liberation Sans',sans-serif;letter-spacing:0.050px;">( 10419 ) numaralı sipariş/fatura ödemesi</div>
<div class="r" style="left:56px;top:602.93px;width:1274px;height:31.63px;background:#fff;"></div>
<div class="r" style="left:56px;top:602.93px;width:1274px;height:1px;background:#f0f0f0;"></div>
<div class="t" style="left:63.00px;top:614.08px;font-size:11px;line-height:11px;color:#333;font-weight:400;font-family:'Liberation Sans',sans-serif;letter-spacing:-0.184px;">12</div>
<div class="r" style="left:92px;top:611.83px;width:16.7px;height:16.7px;background:#dd4b39;border-radius:2px;"></div>
<svg class="r" style="left:96.5px;top:616.83px" width="8" height="8" viewBox="0 0 8 8"><path d="M.3 1.4h7.2M2.6 1.4V.4h2.6v1" fill="none" stroke="#fff" stroke-width="1"/><path d="M1.2 2.2h5.4l-.5 5.6H1.7z" fill="#fff"/><path d="M3.1 3.4v3.2M4.7 3.4v3.2" stroke="#eea79c" stroke-width=".9"/></svg>
<div class="r" style="left:109.2px;top:611.83px;width:12.7px;height:16.7px;background:#00c0ef;border-radius:2px;"></div>
<svg class="r" style="left:113px;top:616.83px" width="5" height="8" viewBox="0 0 5 8"><rect x="1.3" y=".1" width="2.4" height="1.9" fill="#fff"/><path d="M.6 2.8h2.9v3.7h.9v1.2H.6V6.5h.9V4h-.9z" fill="#fff"/></svg>
<div class="r" style="left:124.2px;top:611.83px;width:17.4px;height:16.7px;background:#f39c12;border-radius:2px;"></div>
<svg class="r" style="left:128px;top:616.83px" width="10" height="8" viewBox="0 0 10 8"><path d="M6.2 1H.7v6.2h6.6V4.6" fill="none" stroke="#fff" stroke-width="1.1"/><path d="M8.5.2l1.2 1.2-4.6 4.6-1.8.6.6-1.8z" fill="#fff"/></svg>
<div class="r" style="left:142.1px;top:611.83px;width:50.8px;height:16.7px;background:#00c0ef;border-radius:2px;"></div>
<svg class="r" style="left:146.8px;top:618.23px" width="10" height="6" viewBox="0 0 10 6"><path d="M.3 3C1.6 1 3.3.2 5 .2S8.4 1 9.7 3C8.4 5 6.7 5.8 5 5.8S1.6 5 .3 3z" fill="#fff"/><circle cx="5" cy="3" r="1.6" fill="#00c0ef"/><circle cx="5" cy="3" r=".8" fill="#fff"/></svg>
<div class="t" style="left:158.20px;top:615.86px;font-size:10px;line-height:10px;color:#fff;font-weight:700;font-family:'Liberation Serif',serif;letter-spacing:-0.960px;">Makbuz</div>
<div class="t" style="left:207.00px;top:614.08px;font-size:11px;line-height:11px;color:#333;font-weight:400;font-family:'Liberation Sans',sans-serif;letter-spacing:-0.836px;">NAMİQ MƏMMƏDOV | MERYEM SELÇUKLU</div>
<div class="t" style="left:449.00px;top:614.08px;font-size:11px;line-height:11px;color:#333;font-weight:400;font-family:'Liberation Sans',sans-serif;letter-spacing:-0.184px;">202207050044</div>
<div class="t" style="left:631.00px;top:614.08px;font-size:11px;line-height:11px;color:#333;font-weight:400;font-family:'Liberation Sans',sans-serif;letter-spacing:-0.161px;">05-07-2022 13:58:08</div>
<div class="t" style="left:810.00px;top:614.08px;font-size:11px;line-height:11px;color:#333;font-weight:400;font-family:'Liberation Sans',sans-serif;letter-spacing:-0.168px;">129,60</div>
<svg class="r" style="left:845.64px;top:615.39px" width="9" height="8" viewBox="0 0 9 8"><path d="M.8 8V5.4A3.7 3.7 0 0 1 8.2 5.4V8" fill="none" stroke="#333" stroke-width="1.05"/><path d="M4.5 0V8" stroke="#333" stroke-width="1.05"/></svg>
<div class="t" style="left:888.00px;top:614.08px;font-size:11px;line-height:11px;color:#333;font-weight:400;font-family:'Liberation Sans',sans-serif;letter-spacing:0.108px;">gelir</div>
<div class="t" style="left:955.00px;top:614.08px;font-size:11px;line-height:11px;color:#333;font-weight:400;font-family:'Liberation Sans',sans-serif;letter-spacing:-0.886px;">MERYEM SELÇUKLU</div>
<div class="t" style="left:1096.00px;top:614.08px;font-size:11px;line-height:11px;color:#333;font-weight:400;font-family:'Liberation Sans',sans-serif;letter-spacing:0.050px;">( 10414 ) numaralı sipariş/fatura ödemesi</div>
<div class="r" style="left:56px;top:634.56px;width:1274px;height:31.63px;background:#f9f9f9;"></div>
<div class="r" style="left:56px;top:634.56px;width:1274px;height:1px;background:#f0f0f0;"></div>
<div class="t" style="left:63.00px;top:645.67px;font-size:11px;line-height:11px;color:#333;font-weight:400;font-family:'Liberation Sans',sans-serif;letter-spacing:-0.184px;">13</div>
<div class="r" style="left:92px;top:643.46px;width:16.7px;height:16.7px;background:#dd4b39;border-radius:2px;"></div>
<svg class="r" style="left:96.5px;top:648.46px" width="8" height="8" viewBox="0 0 8 8"><path d="M.3 1.4h7.2M2.6 1.4V.4h2.6v1" fill="none" stroke="#fff" stroke-width="1"/><path d="M1.2 2.2h5.4l-.5 5.6H1.7z" fill="#fff"/><path d="M3.1 3.4v3.2M4.7 3.4v3.2" stroke="#eea79c" stroke-width=".9"/></svg>
<div class="r" style="left:109.2px;top:643.46px;width:12.7px;height:16.7px;background:#00c0ef;border-radius:2px;"></div>
<svg class="r" style="left:113px;top:648.46px" width="5" height="8" viewBox="0 0 5 8"><rect x="1.3" y=".1" width="2.4" height="1.9" fill="#fff"/><path d="M.6 2.8h2.9v3.7h.9v1.2H.6V6.5h.9V4h-.9z" fill="#fff"/></svg>
<div class="r" style="left:124.2px;top:643.46px;width:17.4px;height:16.7px;background:#f39c12;border-radius:2px;"></div>
<svg class="r" style="left:128px;top:648.46px" width="10" height="8" viewBox="0 0 10 8"><path d="M6.2 1H.7v6.2h6.6V4.6" fill="none" stroke="#fff" stroke-width="1.1"/><path d="M8.5.2l1.2 1.2-4.6 4.6-1.8.6.6-1.8z" fill="#fff"/></svg>
<div class="r" style="left:142.1px;top:643.46px;width:50.8px;height:16.7px;background:#00c0ef;border-radius:2px;"></div>
<svg class="r" style="left:146.8px;top:649.86px" width="10" height="6" viewBox="0 0 10 6"><path d="M.3 3C1.6 1 3.3.2 5 .2S8.4 1 9.7 3C8.4 5 6.7 5.8 5 5.8S1.6 5 .3 3z" fill="#fff"/><circle cx="5" cy="3" r="1.6" fill="#00c0ef"/><circle cx="5" cy="3" r=".8" fill="#fff"/></svg>
<div class="t" style="left:158.20px;top:647.49px;font-size:10px;line-height:10px;color:#fff;font-weight:700;font-family:'Liberation Serif',serif;letter-spacing:-0.960px;">Makbuz</div>
<div class="t" style="left:207.00px;top:645.67px;font-size:11px;line-height:11px;color:#333;font-weight:400;font-family:'Liberation Sans',sans-serif;letter-spacing:-0.812px;">ELSEN HÜSEYNOV | MERYEM SELÇUKLU</div>
<div class="t" style="left:449.00px;top:645.67px;font-size:11px;line-height:11px;color:#333;font-weight:400;font-family:'Liberation Sans',sans-serif;letter-spacing:-0.184px;">202207050042</div>
<div class="t" style="left:631.00px;top:645.67px;font-size:11px;line-height:11px;color:#333;font-weight:400;font-family:'Liberation Sans',sans-serif;letter-spacing:-0.161px;">05-07-2022 13:45:12</div>
<div class="t" style="left:810.00px;top:645.67px;font-size:11px;line-height:11px;color:#333;font-weight:400;font-family:'Liberation Sans',sans-serif;letter-spacing:-0.165px;">10,80</div>
<svg class="r" style="left:839.7px;top:646.98px" width="9" height="8" viewBox="0 0 9 8"><path d="M.8 8V5.4A3.7 3.7 0 0 1 8.2 5.4V8" fill="none" stroke="#333" stroke-width="1.05"/><path d="M4.5 0V8" stroke="#333" stroke-width="1.05"/></svg>
<div class="t" style="left:888.00px;top:645.67px;font-size:11px;line-height:11px;color:#333;font-weight:400;font-family:'Liberation Sans',sans-serif;letter-spacing:0.108px;">gelir</div>
<div class="t" style="left:955.00px;top:645.67px;font-size:11px;line-height:11px;color:#333;font-weight:400;font-family:'Liberation Sans',sans-serif;letter-spacing:-0.886px;">MERYEM SELÇUKLU</div>
<div class="t" style="left:1096.00px;top:645.67px;font-size:11px;line-height:11px;color:#333;font-weight:400;font-family:'Liberation Sans',sans-serif;letter-spacing:0.050px;">( 10386 ) numaralı sipariş/fatura ödemesi</div>
<div class="r" style="left:56px;top:666.19px;width:1274px;height:31.63px;background:#fff;"></div>
<div class="r" style="left:56px;top:666.19px;width:1274px;height:1px;background:#f0f0f0;"></div>
<div class="t" style="left:63.00px;top:677.26px;font-size:11px;line-height:11px;color:#333;font-weight:400;font-family:'Liberation Sans',sans-serif;letter-spacing:-0.184px;">14</div>
<div class="r" style="left:92px;top:675.09px;width:16.7px;height:16.7px;background:#dd4b39;border-radius:2px;"></div>
<svg class="r" style="left:96.5px;top:680.09px" width="8" height="8" viewBox="0 0 8 8"><path d="M.3 1.4h7.2M2.6 1.4V.4h2.6v1" fill="none" stroke="#fff" stroke-width="1"/><path d="M1.2 2.2h5.4l-.5 5.6H1.7z" fill="#fff"/><path d="M3.1 3.4v3.2M4.7 3.4v3.2" stroke="#eea79c" stroke-width=".9"/></svg>
<div class="r" style="left:109.2px;top:675.09px;width:12.7px;height:16.7px;background:#00c0ef;border-radius:2px;"></div>
<svg class="r" style="left:113px;top:680.09px" width="5" height="8" viewBox="0 0 5 8"><rect x="1.3" y=".1" width="2.4" height="1.9" fill="#fff"/><path d="M.6 2.8h2.9v3.7h.9v1.2H.6V6.5h.9V4h-.9z" fill="#fff"/></svg>
<div class="r" style="left:124.2px;top:675.09px;width:17.4px;height:16.7px;background:#f39c12;border-radius:2px;"></div>
<svg class="r" style="left:128px;top:680.09px" width="10" height="8" viewBox="0 0 10 8"><path d="M6.2 1H.7v6.2h6.6V4.6" fill="none" stroke="#fff" stroke-width="1.1"/><path d="M8.5.2l1.2 1.2-4.6 4.6-1.8.6.6-1.8z" fill="#fff"/></svg>
<div class="r" style="left:142.1px;top:675.09px;width:50.8px;height:16.7px;background:#00c0ef;border-radius:2px;"></div>
<svg class="r" style="left:146.8px;top:681.49px" width="10" height="6" viewBox="0 0 10 6"><path d="M.3 3C1.6 1 3.3.2 5 .2S8.4 1 9.7 3C8.4 5 6.7 5.8 5 5.8S1.6 5 .3 3z" fill="#fff"/><circle cx="5" cy="3" r="1.6" fill="#00c0ef"/><circle cx="5" cy="3" r=".8" fill="#fff"/></svg>
<div class="t" style="left:158.20px;top:679.12px;font-size:10px;line-height:10px;color:#fff;font-weight:700;font-family:'Liberation Serif',serif;letter-spacing:-0.960px;">Makbuz</div>
<div class="t" style="left:207.00px;top:677.26px;font-size:11px;line-height:11px;color:#333;font-weight:400;font-family:'Liberation Sans',sans-serif;letter-spacing:-0.771px;">SEBİNE XANİM | MERYEM SELÇUKLU</div>
<div class="t" style="left:449.00px;top:677.26px;font-size:11px;line-height:11px;color:#333;font-weight:400;font-family:'Liberation Sans',sans-serif;letter-spacing:-0.184px;">202207050041</div>
<div class="t" style="left:631.00px;top:677.26px;font-size:11px;line-height:11px;color:#333;font-weight:400;font-family:'Liberation Sans',sans-serif;letter-spacing:-0.161px;">05-07-2022 13:40:33</div>
<div class="t" style="left:810.00px;top:677.26px;font-size:11px;line-height:11px;color:#333;font-weight:400;font-family:'Liberation Sans',sans-serif;letter-spacing:-0.165px;">40,00</div>
<svg class="r" style="left:839.7px;top:678.57px" width="9" height="8" viewBox="0 0 9 8"><path d="M.8 8V5.4A3.7 3.7 0 0 1 8.2 5.4V8" fill="none" stroke="#333" stroke-width="1.05"/><path d="M4.5 0V8" stroke="#333" stroke-width="1.05"/></svg>
<div class="t" style="left:888.00px;top:677.26px;font-size:11px;line-height:11px;color:#333;font-weight:400;font-family:'Liberation Sans',sans-serif;letter-spacing:0.127px;">gider</div>
<div class="t" style="left:955.00px;top:677.26px;font-size:11px;line-height:11px;color:#333;font-weight:400;font-family:'Liberation Sans',sans-serif;letter-spacing:-0.886px;">MERYEM SELÇUKLU</div>
<svg class="r" style="left:0px;top:0px" width="1365" height="691" viewBox="0 0 1365 691"><path d="M99.3 265L294 174" stroke="#f00" stroke-width="2.8" stroke-linecap="round"/><path d="M306 168.6L290.8 170.6 294.8 178.6z" fill="#f00" stroke="#f00" stroke-width="0.9" stroke-linejoin="round"/></svg>
<div class="t" style="left:1015.70px;top:612.96px;font-size:19.3px;line-height:19.3px;color:rgba(120,120,120,0.45);font-weight:400;font-family:'Liberation Sans',sans-serif;letter-spacing:0.013px;">Windows&#x27;u Etkinleştir</div>
<div class="t" style="left:1015.00px;top:637.00px;font-size:15px;line-height:15px;color:rgba(120,120,120,0.45);font-weight:400;font-family:'Liberation Sans',sans-serif;letter-spacing:0.013px;">Windows&#x27;u etkinleştirmek için Ayarlar&#x27;a gidin.</div>
<div class="r" style="left:0px;top:688px;width:1365px;height:3px;background:#0a0a0a;"></div>
<div class="r" style="left:48px;top:688px;width:344px;height:3px;background:#3a3a3a;"></div>
<div class="r" style="left:834px;top:688px;width:48px;height:3px;background:#3a3a3a;"></div>
</body></html>
